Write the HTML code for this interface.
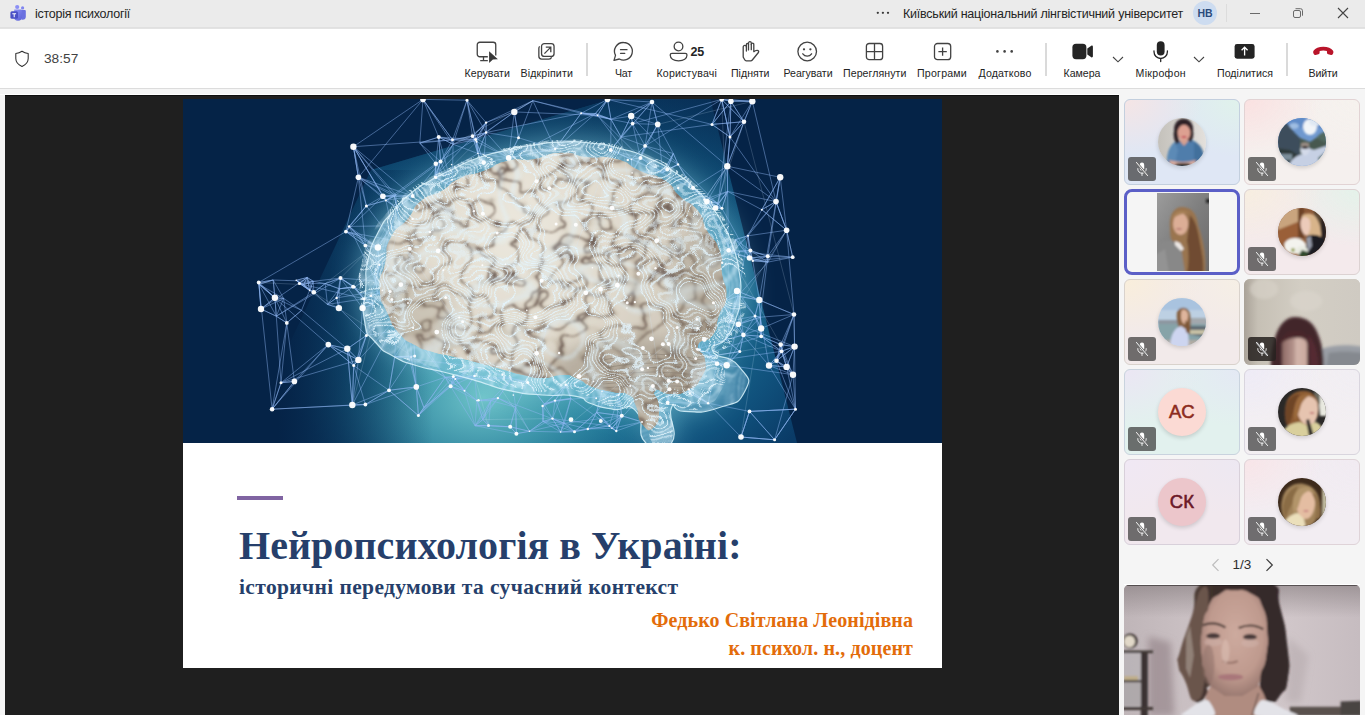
<!DOCTYPE html>
<html lang="uk">
<head>
<meta charset="utf-8">
<title>історія психології</title>
<style>
*{box-sizing:border-box;margin:0;padding:0}
html,body{width:1365px;height:715px;overflow:hidden;background:#f5f5f5}
body{position:relative;font-family:"Liberation Sans",sans-serif;color:#242424}
.abs{position:absolute}
#titlebar{left:0;top:0;width:1365px;height:28px;background:#ebebeb;border-bottom:1px solid #e0e0e0}
#titlebar .t{position:absolute;top:0;height:30px;line-height:29.500px;font-size:12.500px;color:#242424;white-space:nowrap}
#toolbar{left:0;top:28px;width:1365px;height:61px;background:#fff;border-top:1px solid #e3e3e3;border-bottom:1px solid #dcdcdc}
.tb{position:absolute;top:0;height:60px;transform:translateX(-50%);text-align:center;white-space:nowrap}
.tb svg{position:absolute;left:50%;top:10px;transform:translateX(-50%);overflow:visible}
.tb span{position:absolute;left:50%;top:37px;transform:translateX(-50%);font-size:11.4px;line-height:14px;color:#242424}
.sep{position:absolute;top:14px;width:1.500px;height:33px;background:#dadada}
#stage{left:5px;top:95px;width:1114px;height:620px;background:#1f1f1f}
#slide{left:183px;top:99px;width:759px;height:569px;background:#fff;overflow:hidden}
#slide .ser{position:absolute;font-family:"Liberation Serif",serif;font-weight:bold;white-space:nowrap}
.tile{position:absolute;width:115.500px;height:86px;border-radius:6px;border:1px solid #dcdce0;overflow:hidden}
.tile .av{position:absolute;left:33px;top:17.700px;width:48px;height:48px;border-radius:50%;overflow:hidden;box-shadow:0 2px 4px rgba(0,0,0,.15)}
.tile .mute{position:absolute;left:3px;top:56.700px;width:28px;height:24px;border-radius:3px;background:rgba(60,60,60,.72)}
.tile .mute svg{position:absolute;left:6px;top:4px}
.ini{font-size:18.500px;line-height:48px;text-align:center;font-weight:normal;-webkit-text-stroke:.55px currentColor;letter-spacing:.3px}
.lb{position:absolute;top:37px;font-size:10.600px;line-height:14px;color:#242424;white-space:nowrap;text-align:center}
</style>
</head>
<body>

<!-- ===== Title bar ===== -->
<div id="titlebar" class="abs">
  <svg class="abs" style="left:10px;top:4px" width="17" height="18" viewBox="0 0 17 18">
    <defs><linearGradient id="tg" x1="0" y1="0" x2="1" y2="1"><stop offset="0" stop-color="#8f94f8"/><stop offset="1" stop-color="#5a60d6"/></linearGradient></defs>
    <circle cx="12.600" cy="3.900" r="1.600" fill="#7f85f0"/>
    <circle cx="7.200" cy="3" r="2.100" fill="#8b8ff5"/>
    <path d="M9.500 6h5.300a1 1 0 0 1 1 1v5.500a3.300 3.300 0 0 1-3.300 3.300h-1z" fill="#6a70e0"/>
    <path d="M4.200 5.500h6.600a1.200 1.200 0 0 1 1.200 1.200v6a4 4 0 0 1-4 4 4 4 0 0 1-4-4z" fill="url(#tg)"/>
    <rect x="0.400" y="7.200" width="7.600" height="7.600" rx="1.500" fill="#4a50c6"/>
    <path d="M2.300 9.300h3.800v1H4.700v3H3.700v-3H2.300z" fill="#fff"/>
  </svg>
  <div class="t" id="ttl" style="letter-spacing:-0.255px;left:35px">історія психології</div>
  <svg class="abs" style="left:876px;top:11px" width="14" height="4" viewBox="0 0 14 4"><circle cx="1.800" cy="1.800" r="1.150" fill="#3a3a3a"/><circle cx="6.900" cy="1.800" r="1.150" fill="#3a3a3a"/><circle cx="12" cy="1.800" r="1.150" fill="#3a3a3a"/></svg>
  <div class="t" id="org" style="letter-spacing:-0.224px;left:903px">Київський національний лінгвістичний університет</div>
  <div class="abs" style="left:1193px;top:1px;width:24px;height:24px;border-radius:50%;background:#cddcf0;color:#2b4b7c;font-size:10.500px;font-weight:bold;line-height:24.500px;text-align:center">НВ</div>
  <div class="abs" style="left:1226px;top:4px;width:1px;height:18px;background:#dcdcdc"></div>
  <svg class="abs" style="left:1249px;top:7px" width="12" height="12" viewBox="0 0 12 12"><path d="M1 6.500h10" stroke="#6a6a6a" stroke-width="1" fill="none"/></svg>
  <svg class="abs" style="left:1292px;top:7px" width="12" height="12" viewBox="0 0 12 12"><rect x="1.500" y="3.500" width="7" height="7" rx="1.500" stroke="#6a6a6a" fill="none"/><path d="M3.500 1.700h5a2 2 0 0 1 2 2v5" stroke="#6a6a6a" fill="none"/></svg>
  <svg class="abs" style="left:1337px;top:7px" width="12" height="12" viewBox="0 0 12 12"><path d="M1 1l10 10M11 1L1 11" stroke="#444" stroke-width="1.100" fill="none"/></svg>
</div>

<!-- ===== Toolbar ===== -->
<div id="toolbar" class="abs">
  <svg class="abs" style="left:14px;top:21px" width="16" height="18" viewBox="0 0 16 18"><path d="M8 1.200c2 1.400 4 2 6.200 2.200v5.200c0 3.700-2.500 6.300-6.200 7.900C4.300 14.900 1.800 12.300 1.800 8.600V3.400C4 3.200 6 2.600 8 1.200z" fill="none" stroke="#2e2e2e" stroke-width="1.050" stroke-linejoin="round"/></svg>
  <div class="abs" style="left:44px;top:22px;font-size:13.700px;line-height:16px;color:#424242">38:57</div>
    <!-- toolbar icons: coordinates relative to toolbar (top = 28px page; inner origin y=29) -->
  <div class="sep" style="left:586px"></div>
  <div class="sep" style="left:1045px"></div>
  <div class="sep" style="left:1286px"></div>

  <!-- Керувати -->
  <svg class="abs" style="left:476px;top:12px" width="23" height="23" viewBox="0 0 23 23">
    <path d="M11.800 15.750H3.750A2.500 2.500 0 0 1 1.250 13.250V3.750A2.500 2.500 0 0 1 3.750 1.250H17.250A2.500 2.500 0 0 1 19.750 3.750V14.500" fill="none" stroke="#424242" stroke-width="1.300"/>
    <path d="M7.500 15.750V19.700M4.200 19.700H11.800" fill="none" stroke="#424242" stroke-width="1.300"/>
    <path d="M13.100 10.200L21.900 18.300 16.900 18.500 13.100 21.900z" fill="#383838"/>
  </svg>
  <span class="lb" style="left:464.5px;width:45.500px;letter-spacing:0.053px">Керувати</span>

  <!-- Відкріпити -->
  <svg class="abs" style="left:537px;top:13px" width="20" height="19" viewBox="0 0 20 19">
    <rect x="4.550" y="1.550" width="12.500" height="12.900" rx="2.800" fill="none" stroke="#424242" stroke-width="1.300"/>
    <path d="M2.600 4.400A2.800 2.800 0 0 0 1.850 6.400V14.300A2.800 2.800 0 0 0 4.650 17.100H12A2.800 2.800 0 0 0 14.600 15.300" fill="none" stroke="#424242" stroke-width="1.300"/>
    <path d="M7.400 11.600L13.600 5.400M8.800 5.200H13.800V10.200" fill="none" stroke="#424242" stroke-width="1.300"/>
  </svg>
  <span class="lb" style="left:520.500px;width:52.500px;letter-spacing:0.159px">Відкріпити</span>

  <!-- Чат -->
  <svg class="abs" style="left:612px;top:12px" width="23" height="22" viewBox="0 0 23 22">
    <path d="M11.600 1.500a8.800 8.800 0 1 1-4.300 16.500L2 19.400l1.500-5A8.800 8.800 0 0 1 11.600 1.500z" fill="none" stroke="#424242" stroke-width="1.300" stroke-linejoin="round"/>
    <path d="M8.500 8.700h6.500M8.500 12.300h4.300" fill="none" stroke="#424242" stroke-width="1.300" stroke-linecap="round"/>
  </svg>
  <span class="lb" style="left:615px;width:17px;letter-spacing:-0.193px">Чат</span>

  <!-- Користувачі -->
  <svg class="abs" style="left:669px;top:12px" width="20" height="22" viewBox="0 0 20 22">
    <circle cx="9.500" cy="5.500" r="4.350" fill="none" stroke="#424242" stroke-width="1.300"/>
    <path d="M3 12.300h13.200a1.800 1.800 0 0 1 1.800 1.800c0 3.300-3.300 5.700-8.400 5.700S1.200 17.400 1.200 14.100A1.800 1.800 0 0 1 3 12.300z" fill="none" stroke="#424242" stroke-width="1.300"/>
  </svg>
  <span class="abs" style="left:690.500px;top:15.500px;font-size:12.500px;line-height:14px;font-weight:bold;color:#242424;letter-spacing:-.3px">25</span>
  <span class="lb" style="left:656.500px;width:60.500px;letter-spacing:0.183px">Користувачі</span>

  <!-- Підняти -->
  <svg class="abs" style="left:741px;top:12px" width="20" height="22" viewBox="0 0 20 22">
    <path d="M2.200 15.500V6a1.600 1.600 0 0 1 3.200 0V3.400a1.050 1.050 0 0 1 2.100 0V2.100a1.400 1.400 0 0 1 2.800 0V3.400a1.250 1.250 0 0 1 2.500 0V10.700c.9-.9 2.200-1.500 3.500-1.400 1.200.1 1.800 1.300 1.100 2.200L11.300 19c-.4.500-1 .8-1.600.8H5.300c-.7 0-1.300-.4-1.600-1l-1.100-2c-.3-.4-.4-.9-.4-1.300z" fill="none" stroke="#424242" stroke-width="1.300" stroke-linejoin="round"/>
    <path d="M5.400 6v4M7.500 3.400v5.500M10.300 3.400v5.300" fill="none" stroke="#424242" stroke-width="1.300" stroke-linecap="round"/>
  </svg>
  <span class="lb" style="left:731px;width:38.500px;letter-spacing:-0.002px">Підняти</span>

  <!-- Реагувати -->
  <svg class="abs" style="left:796px;top:12px" width="22" height="22" viewBox="0 0 22 22">
    <circle cx="11.200" cy="10.500" r="9.300" fill="none" stroke="#424242" stroke-width="1.300"/>
    <circle cx="8" cy="8.300" r="1.150" fill="#424242"/><circle cx="14.400" cy="8.300" r="1.150" fill="#424242"/>
    <path d="M6.800 12.800c2.200 3 6.600 3 8.800 0" fill="none" stroke="#424242" stroke-width="1.300" stroke-linecap="round"/>
  </svg>
  <span class="lb" style="left:783.500px;width:49px;letter-spacing:-0.054px">Реагувати</span>

  <!-- Переглянути -->
  <svg class="abs" style="left:865px;top:13px" width="19" height="19" viewBox="0 0 19 19">
    <rect x="1.400" y="1.500" width="16.200" height="16.200" rx="2.800" fill="none" stroke="#424242" stroke-width="1.300"/>
    <path d="M9.500 1.500v16.200M1.400 9.600h16.200" fill="none" stroke="#424242" stroke-width="1.300"/>
  </svg>
  <span class="lb" style="left:843px;width:63.500px;letter-spacing:0.067px">Переглянути</span>

  <!-- Програми -->
  <svg class="abs" style="left:933px;top:13px" width="19" height="19" viewBox="0 0 19 19">
    <rect x="1.500" y="1.500" width="16.200" height="16.200" rx="3" fill="none" stroke="#424242" stroke-width="1.300"/>
    <path d="M9.600 5.400v8.400M5.400 9.600h8.400" fill="none" stroke="#424242" stroke-width="1.300"/>
  </svg>
  <span class="lb" style="left:917px;width:50px;letter-spacing:0.219px">Програми</span>

  <!-- Додатково -->
  <svg class="abs" style="left:995px;top:20px" width="20" height="5" viewBox="0 0 20 5">
    <circle cx="2.400" cy="2.400" r="1.300" fill="#424242"/><circle cx="9.600" cy="2.400" r="1.300" fill="#424242"/><circle cx="16.700" cy="2.400" r="1.300" fill="#424242"/>
  </svg>
  <span class="lb" style="left:978.500px;width:53px;letter-spacing:0.144px">Додатково</span>

  <!-- Камера -->
  <svg class="abs" style="left:1072px;top:14px" width="22" height="17" viewBox="0 0 22 17">
    <rect x="0.400" y="0.800" width="14" height="15.400" rx="3.600" fill="#242424"/>
    <path d="M15.300 5.600l4-2.800c.7-.5 1.600 0 1.600.9v9.600c0 .9-.9 1.400-1.600.9l-4-2.800z" fill="#242424"/>
  </svg>
  <span class="lb" style="left:1063.500px;width:37px;letter-spacing:-0.005px">Камера</span>
  <svg class="abs" style="left:1112px;top:27px" width="12" height="7" viewBox="0 0 12 7"><path d="M1 1l5 4.800L11 1" fill="none" stroke="#424242" stroke-width="1.100"/></svg>

  <!-- Мікрофон -->
  <svg class="abs" style="left:1152px;top:12px" width="17" height="22" viewBox="0 0 17 22">
    <rect x="4.800" y="0.200" width="7.800" height="14.300" rx="3.900" fill="#242424"/>
    <path d="M2 9.800v1a6.700 6.700 0 0 0 13.400 0v-1M8.700 17.500v3" fill="none" stroke="#242424" stroke-width="1.300" stroke-linecap="round"/>
  </svg>
  <span class="lb" style="left:1135.500px;width:50.500px;letter-spacing:0.305px">Мікрофон</span>
  <svg class="abs" style="left:1193px;top:27px" width="12" height="7" viewBox="0 0 12 7"><path d="M1 1l5 4.800L11 1" fill="none" stroke="#424242" stroke-width="1.100"/></svg>

  <!-- Поділитися -->
  <svg class="abs" style="left:1234px;top:15px" width="21" height="15" viewBox="0 0 21 15">
    <rect x="0.600" y="0" width="20" height="14.700" rx="2.400" fill="#242424"/>
    <path d="M10.600 11.500V3.300M7.600 6.200l3-3 3 3" fill="none" stroke="#fff" stroke-width="1.300"/>
  </svg>
  <span class="lb" style="left:1217px;width:56px;letter-spacing:0.028px">Поділитися</span>

  <!-- Вийти -->
  <svg class="abs" style="left:1313px;top:17px" width="21" height="10" viewBox="0 0 21 10">
    <path d="M10.300 0.800c4.500 0 8 1.500 9.600 3.600.7.900.6 2 .2 3l-.3.700c-.3.700-1 1-1.800.8l-2.800-.7c-.7-.2-1.200-.8-1.200-1.500l-.1-1.700c-2.300-.8-4.900-.8-7.200 0l-.1 1.700c0 .7-.5 1.300-1.200 1.500l-2.800.7c-.8.200-1.500-.1-1.800-.8l-.3-.7c-.4-1-.5-2.100.2-3C2.300 2.300 5.800.8 10.300.8z" fill="#b9142a"/>
  </svg>
  <span class="lb" style="left:1308.500px;width:29px;letter-spacing:-0.134px">Вийти</span>

</div>

<!-- ===== Stage ===== -->
<div class="abs" style="left:0;top:94px;width:1119px;height:1px;background:#fff"></div>
<div id="stage" class="abs"><div class="abs" style="left:0;top:0;width:100%;height:1.200px;background:#0f0f0f"></div></div>
<div id="slide" class="abs">
  <div class="abs" style="left:0;top:0;width:759px;height:343.750px;overflow:hidden;background:#052347"><svg class="abs" style="left:0;top:-1px" width="759" height="345" viewBox="0 0 759 345">
<defs>
<radialGradient id="glow" cx="0" cy="0" r="1" gradientUnits="userSpaceOnUse" gradientTransform="translate(372 195) scale(300 235)">
<stop offset="0" stop-color="#2f8fa8"/><stop offset=".5" stop-color="#1d7294"/><stop offset=".8" stop-color="#10517c"/><stop offset="1" stop-color="#0a3b67"/></radialGradient>
<radialGradient id="glow2" cx="0" cy="0" r="1" gradientUnits="userSpaceOnUse" gradientTransform="translate(300 300) rotate(-8) scale(215 150)">
<stop offset="0" stop-color="#74c8cc" stop-opacity=".95"/><stop offset=".35" stop-color="#4eaab8" stop-opacity=".7"/><stop offset=".7" stop-color="#2f8fa8" stop-opacity=".3"/><stop offset="1" stop-color="#2f8fa8" stop-opacity="0"/></radialGradient>
<linearGradient id="leftfade" x1="95" y1="0" x2="250" y2="0" gradientUnits="userSpaceOnUse"><stop offset="0" stop-color="#052347"/><stop offset="1" stop-color="#052347" stop-opacity="0"/></linearGradient>
<linearGradient id="topfade" x1="0" y1="0" x2="0" y2="150" gradientUnits="userSpaceOnUse"><stop offset="0" stop-color="#052347" stop-opacity=".55"/><stop offset="1" stop-color="#052347" stop-opacity="0"/></linearGradient>
<radialGradient id="beige" cx="330" cy="130" r="230" gradientUnits="userSpaceOnUse">
<stop offset="0" stop-color="#e6dccb"/><stop offset=".5" stop-color="#cfc1ac"/><stop offset="1" stop-color="#a3917a"/></radialGradient>
<filter id="b3" x="-20%" y="-20%" width="140%" height="140%"><feGaussianBlur stdDeviation="3"/></filter>
<filter id="b8" x="-20%" y="-20%" width="140%" height="140%"><feGaussianBlur stdDeviation="8"/></filter>
<filter id="b14" x="-30%" y="-30%" width="160%" height="160%"><feGaussianBlur stdDeviation="14"/></filter>
<filter id="sulci" x="0" y="0" width="100%" height="100%" color-interpolation-filters="sRGB">
 <feTurbulence type="fractalNoise" baseFrequency="0.042 0.048" numOctaves="2" seed="9"/>
 <feColorMatrix type="matrix" values="0 0 0 0 .36  0 0 0 0 .27  0 0 0 0 .22  1 0 0 0 0"/>
 <feComponentTransfer><feFuncA type="table" tableValues="0 0 0 0 0 0 0 0 0 0 0 0 0 0 0 0 0 0 0 0 0 0 0 0 0 0 0 0 0 0 0 0 0 0 0 0 0 0 0 0 0 0.02 0.06 0.11 0.15 0.23 0.6 0.95 0.95 0.6 0.23 0.15 0.11 0.06 0.02 0 0 0 0 0 0 0 0 0 0 0 0 0 0 0 0 0 0 0 0 0 0 0 0 0 0 0 0 0 0 0 0 0 0 0 0 0 0 0 0 0 0 0 0 0 0"/></feComponentTransfer>
 <feGaussianBlur stdDeviation=".8"/>
</filter>
<filter id="hil" x="0" y="0" width="100%" height="100%" color-interpolation-filters="sRGB">
 <feTurbulence type="fractalNoise" baseFrequency="0.042 0.048" numOctaves="2" seed="9"/>
 <feColorMatrix type="matrix" values="0 0 0 0 1  0 0 0 0 .98  0 0 0 0 .94  1 0 0 0 0"/>
 <feComponentTransfer><feFuncA type="table" tableValues="0.38 0.38 0.38 0.38 0.38 0.38 0.38 0.38 0.38 0.38 0.38 0.38 0.38 0.38 0.38 0.38 0.38 0.38 0.38 0.38 0.38 0.38 0.38 0.38 0.38 0.38 0.38 0.38 0.38 0.38 0.38 0.38 0.38 0.38 0.38 0.38 0.34 0.3 0.25 0.21 0.17 0.13 0.08 0.04 0 0 0 0 0 0 0 0 0.04 0.08 0.13 0.17 0.21 0.25 0.3 0.34 0.38 0.38 0.38 0.38 0.38 0.38 0.38 0.38 0.38 0.38 0.38 0.38 0.38 0.38 0.38 0.38 0.38 0.38 0.38 0.38 0.38 0.38 0.38 0.38 0.38 0.38 0.38 0.38 0.38 0.38 0.38 0.38 0.38 0.38 0.38 0.38 0.38 0.38 0.38 0.38 0.38"/></feComponentTransfer>
 <feGaussianBlur stdDeviation="1.5"/>
</filter>
<filter id="wisp" x="0" y="0" width="100%" height="100%" color-interpolation-filters="sRGB">
 <feTurbulence type="fractalNoise" baseFrequency="0.014 0.018" numOctaves="3" seed="23"/>
 <feColorMatrix type="matrix" values="0 0 0 0 .9  0 0 0 0 .97  0 0 0 0 1  1 0 0 0 0"/>
 <feComponentTransfer><feFuncA type="table" tableValues="0 0 0 0 0 0 0 0 0 0 0 0 0 0 0 0 0 0 0 0 0 0 0 0 0 0 0 0 0 0 0 0 0 0 0 0.08 0.9 0.08 0 0 0.08 0.9 0.08 0 0 0.49 0.49 0 0 0.08 0.9 0.08 0 0 0.49 0.49 0 0 0.08 0.9 0.08 0 0 0.08 0.9 0.08 0 0 0 0 0 0 0 0 0 0 0 0 0 0 0 0 0 0 0 0 0 0 0 0 0 0 0 0 0 0 0 0 0 0 0"/></feComponentTransfer>
 <feGaussianBlur stdDeviation=".5"/>
</filter>
<filter id="wisp2" x="0" y="0" width="100%" height="100%" color-interpolation-filters="sRGB">
 <feTurbulence type="fractalNoise" baseFrequency="0.02 0.016" numOctaves="2" seed="41"/>
 <feColorMatrix type="matrix" values="0 0 0 0 .85  0 0 0 0 .95  0 0 0 0 1  1 0 0 0 0"/>
 <feComponentTransfer><feFuncA type="table" tableValues="0 0 0 0 0 0 0 0 0 0 0 0 0 0 0 0 0 0 0 0 0 0 0 0 0 0 0 0 0 0 0 0 0 0 0 0 0 0.1 0.6 0.13 0.2 0.03 0 0.1 0.6 0.13 0.2 0.03 0 0.1 0.6 0.13 0.2 0.03 0 0.1 0.6 0.13 0.2 0.03 0 0.1 0.6 0.13 0.2 0.03 0 0 0 0 0 0 0 0 0 0 0 0 0 0 0 0 0 0 0 0 0 0 0 0 0 0 0 0 0 0 0 0 0 0 0"/></feComponentTransfer>
 <feGaussianBlur stdDeviation=".8"/>
</filter>
<filter id="rib" x="0" y="0" width="100%" height="100%" color-interpolation-filters="sRGB">
 <feTurbulence type="fractalNoise" baseFrequency="0.009 0.012" numOctaves="2" seed="77"/>
 <feColorMatrix type="matrix" values="0 0 0 0 .88  0 0 0 0 .96  0 0 0 0 1  1 0 0 0 0"/>
 <feComponentTransfer><feFuncA type="table" tableValues="0 0 0 0 0 0 0 0 0 0 0 0 0 0 0 0 0 0 0 0 0 0 0 0 0 0 0 0 0 0 0 0 0 0 0 0 0.14 0.28 0.42 0.28 0.14 0 0 0 0 0 0 0 0.14 0.28 0.42 0.28 0.14 0 0 0 0 0 0 0 0.14 0.28 0.42 0.28 0.14 0 0 0 0 0 0 0 0 0 0 0 0 0 0 0 0 0 0 0 0 0 0 0 0 0 0 0 0 0 0 0 0 0 0 0 0"/></feComponentTransfer>
 <feGaussianBlur stdDeviation="1.2"/>
</filter>
<clipPath id="bc"><path d="M196.8 190.2C195.9 173.2 198.5 182.0 202.2 165.1C205.9 148.2 200.2 154.4 207.8 139.5C215.5 124.7 215.1 132.6 225.1 120.4C235.2 108.2 226.8 112.2 238.1 103.0C249.3 93.7 246.2 100.2 259.0 92.7C271.8 85.2 262.5 87.0 276.4 80.5C290.3 73.9 284.8 78.8 300.7 73.0C316.6 67.2 307.6 66.9 324.1 63.0C340.6 59.0 332.2 63.9 350.2 61.2C368.2 58.5 360.0 55.5 378.1 54.8C396.3 54.1 386.4 57.1 404.7 59.2C423.0 61.2 415.5 56.5 433.0 61.1C450.6 65.6 441.0 65.7 457.2 72.9C473.4 80.1 468.4 74.0 481.7 82.6C494.9 91.2 485.9 88.4 497.0 98.6C508.1 108.8 506.1 101.9 515.0 113.1C524.0 124.4 516.8 119.5 523.8 132.3C530.9 145.2 531.2 137.5 536.2 151.7C541.2 165.9 536.5 159.5 538.8 175.0C541.1 190.5 544.2 184.1 543.2 198.3C542.2 212.5 540.2 204.9 535.8 217.7C531.5 230.5 537.0 226.9 530.0 236.8C523.1 246.7 517.6 239.1 514.9 247.5C512.2 255.9 521.0 251.2 522.0 262.0C523.0 272.8 523.7 270.0 518.0 280.0C512.3 290.0 515.0 286.7 505.0 292.0C495.0 297.3 499.0 295.7 488.0 296.0C477.0 296.3 476.0 288.3 472.0 293.0C468.0 297.7 476.3 298.0 476.0 310.0C475.7 322.0 476.7 323.7 471.0 329.0C465.3 334.3 465.0 333.0 459.0 326.0C453.0 319.0 457.3 317.7 453.0 308.0C448.7 298.3 453.7 301.7 446.0 297.0C438.3 292.3 442.0 296.7 430.0 294.0C418.0 291.3 421.7 293.3 410.0 289.0C398.3 284.7 405.0 285.0 395.0 281.0C385.0 277.0 391.7 277.3 380.0 277.0C368.3 276.7 373.3 280.0 360.0 280.0C346.7 280.0 354.0 280.0 340.0 277.0C326.0 274.0 332.7 275.0 318.0 271.0C303.3 267.0 311.3 269.0 296.0 265.0C280.7 261.0 287.3 262.7 272.0 259.0C256.7 255.3 263.3 258.0 250.0 254.0C236.7 250.0 243.3 253.3 232.0 247.0C220.7 240.7 225.0 245.3 216.0 235.0C207.0 224.7 211.4 230.9 205.0 216.0C198.6 201.1 197.7 207.2 196.8 190.2Z"/></clipPath>
<clipPath id="mc"><path d="M182.8 189.7C183.8 169.3 180.9 180.6 184.9 162.3C189.0 144.1 186.4 151.4 194.8 135.0C203.2 118.5 199.2 126.2 210.1 113.1C221.1 99.9 215.2 105.8 227.7 95.5C240.1 85.3 233.5 90.4 247.4 82.4C261.2 74.4 253.9 78.8 269.3 71.5C284.6 64.2 276.2 66.7 293.4 60.5C310.5 54.3 302.5 57.2 320.7 52.8C339.0 48.5 328.8 50.3 348.1 47.4C367.4 44.4 358.7 44.8 378.8 44.1C398.8 43.3 388.6 43.0 408.3 45.2C428.0 47.4 418.5 45.5 437.9 50.6C457.2 55.8 448.8 52.8 466.4 60.5C483.9 68.2 475.9 64.2 490.4 73.6C505.0 83.1 498.1 78.0 510.2 89.0C522.2 99.9 516.7 94.1 526.6 106.5C536.4 118.9 532.1 112.3 539.7 126.2C547.4 140.1 544.1 132.4 549.6 148.1C555.1 163.8 553.6 156.5 556.1 173.3C558.7 190.1 558.3 182.8 557.2 198.5C556.1 214.2 557.6 206.5 552.9 220.4C548.1 234.2 550.7 229.1 543.0 240.1C535.3 251.0 525.5 243.7 529.9 253.2C534.2 262.7 545.6 255.0 556.1 268.6C566.7 282.1 568.9 279.9 561.6 293.7C554.3 307.6 554.3 303.6 534.2 310.2C514.2 316.7 516.7 313.4 501.4 313.4C486.1 313.4 492.6 299.6 488.3 310.2C483.9 320.7 496.7 333.5 488.3 345.2C479.9 356.9 474.8 355.8 463.1 345.2C451.4 334.6 464.2 324.8 453.2 313.4C442.3 302.1 445.2 313.8 430.2 311.3C415.3 308.7 421.1 310.2 408.3 305.8C395.5 301.4 408.3 301.0 391.9 298.1C375.5 295.2 380.9 298.8 359.1 297.0C337.2 295.2 348.1 297.4 326.2 292.6C304.3 287.9 315.2 289.0 293.4 282.8C271.5 276.6 280.6 279.1 260.5 274.0C240.4 268.9 249.6 272.6 233.1 267.5C216.7 262.3 224.7 266.4 211.2 258.7C197.7 251.0 202.5 256.1 192.6 244.5C182.8 232.8 184.9 241.9 181.7 223.7C178.4 205.4 181.7 210.2 182.8 189.7Z"/></clipPath>
<clipPath id="hc"><path d="M176.8 192.3C175.3 173.1 174.9 182.9 179.0 164.1C183.2 145.3 180.5 152.8 189.2 135.8C197.9 118.9 193.7 126.8 205.0 113.2C216.3 99.7 210.3 105.7 223.1 95.2C235.9 84.6 229.1 89.9 243.4 81.6C257.8 73.3 250.2 77.8 266.0 70.3C281.9 62.8 273.2 65.4 290.9 59.0C308.6 52.6 300.3 55.6 319.1 51.1C338.0 46.6 327.4 48.5 347.4 45.4C367.4 42.4 358.3 42.8 379.0 42.1C399.8 41.3 389.2 40.9 409.6 43.2C429.9 45.4 420.1 43.6 440.1 48.8C460.0 54.1 451.4 51.1 469.4 59.0C487.5 66.9 479.2 62.8 494.3 72.6C509.4 82.4 502.2 77.1 514.6 88.4C527.1 99.7 521.4 93.7 531.6 106.5C541.8 119.3 537.2 112.5 545.1 126.8C553.1 141.1 549.7 133.2 555.3 149.4C561.0 165.6 559.5 158.1 562.1 175.4C564.7 192.7 564.4 185.2 563.2 201.4C562.1 217.6 563.6 209.7 558.7 224.0C553.8 238.3 556.4 233.0 548.5 244.3C540.6 255.6 537.2 248.1 535.0 257.9C532.7 267.7 541.0 261.6 541.8 273.7C542.5 285.8 543.6 282.7 537.2 294.0C530.8 305.3 533.8 301.6 522.5 307.6C511.2 313.6 515.8 311.7 503.3 312.1C490.9 312.5 489.8 303.5 485.3 308.7C480.7 314.0 490.2 314.4 489.8 327.9C489.4 341.5 490.5 343.4 484.1 349.4C477.7 355.4 477.4 353.9 470.6 346.0C463.8 338.1 468.7 336.6 463.8 325.7C458.9 314.8 464.5 318.5 455.9 313.2C447.2 308.0 451.4 312.9 437.8 309.9C424.2 306.8 428.4 309.1 415.2 304.2C402.0 299.3 409.6 299.7 398.2 295.2C386.9 290.6 394.5 291.0 381.3 290.6C368.1 290.3 373.8 294.0 358.7 294.0C343.6 294.0 351.9 294.0 336.1 290.6C320.3 287.3 327.8 288.4 311.2 283.9C294.7 279.4 303.7 281.6 286.4 277.1C269.1 272.6 276.6 274.5 259.3 270.3C241.9 266.2 249.5 269.2 234.4 264.7C219.3 260.1 226.9 263.9 214.1 256.8C201.3 249.6 206.2 254.9 196.0 243.2C185.8 231.5 190.0 238.7 183.6 221.7C177.1 204.8 178.3 211.6 176.8 192.3Z"/></clipPath>
</defs>
<rect width="759" height="345" fill="#052347"/>
<path d="M188 72L432 0H527L614 345H60z" fill="url(#glow)"/>
<path d="M188 72L432 0H527L614 345H60z" fill="url(#glow2)"/>
<rect x="60" y="72" width="240" height="273" fill="url(#leftfade)"/>
<path d="M188 72L432 0H527L570 150H150z" fill="url(#topfade)"/>
<path d="M75.7 184.5L76.1 186.3 M75.7 184.5L90.2 182.0 M75.7 184.5L91.9 199.8 M91.9 199.8L100.7 200.5 M91.9 199.8L78.0 211.0 M91.9 199.8L90.2 182.0 M91.9 199.8L93.3 218.2 M91.9 199.8L76.1 186.3 M91.9 199.8L75.7 184.5 M91.9 199.8L118.5 212.4 M78.0 211.0L93.3 218.2 M78.0 211.0L91.9 199.8 M78.0 211.0L76.1 186.3 M78.0 211.0L100.7 200.5 M78.0 211.0L75.7 184.5 M78.0 211.0L124.2 179.5 M103.8 224.9L93.3 218.2 M103.8 224.9L118.5 212.4 M103.8 224.9L100.7 200.5 M103.8 224.9L91.9 199.8 M130.8 194.3L126.6 192.4 M130.8 194.3L130.3 183.3 M130.8 194.3L120.6 186.6 M130.8 194.3L142.2 185.6 M130.8 194.3L124.2 179.5 M130.8 194.3L116.4 185.4 M130.8 194.3L93.3 218.2 M155.9 210.1L153.6 199.9 M155.9 210.1L144.4 206.4 M155.9 210.1L156.4 190.8 M155.9 210.1L183.4 237.4 M145.3 246.6L164.3 250.8 M145.3 246.6L170.7 267.5 M145.3 246.6L175.4 261.9 M164.3 250.8L175.4 261.9 M164.3 250.8L170.7 267.5 M164.3 250.8L145.3 246.6 M164.3 250.8L183.4 237.4 M164.3 250.8L169.3 307.0 M170.7 267.5L175.4 261.9 M170.7 267.5L164.3 250.8 M170.7 267.5L183.4 237.4 M170.7 267.5L145.3 246.6 M170.7 267.5L169.3 307.0 M170.7 267.5L215.6 217.8 M175.4 261.9L170.7 267.5 M175.4 261.9L164.3 250.8 M175.4 261.9L183.4 237.4 M175.4 261.9L145.3 246.6 M175.4 261.9L179.6 210.1 M98.0 284.8L111.4 283.4 M98.0 284.8L89.1 311.2 M98.0 284.8L103.8 224.9 M98.0 284.8L145.3 246.6 M98.0 284.8L93.3 218.2 M98.0 284.8L164.3 250.8 M98.0 284.8L175.4 261.9 M111.4 283.4L98.0 284.8 M111.4 283.4L89.1 311.2 M111.4 283.4L145.3 246.6 M111.4 283.4L103.8 224.9 M89.1 311.2L98.0 284.8 M89.1 311.2L111.4 283.4 M89.1 311.2L169.3 307.0 M89.1 311.2L145.3 246.6 M89.1 311.2L103.8 224.9 M169.3 307.0L182.4 306.5 M169.3 307.0L170.7 267.5 M169.3 307.0L206.0 292.3 M169.3 307.0L175.4 261.9 M169.3 307.0L164.3 250.8 M169.3 307.0L215.6 217.8 M182.4 306.5L169.3 307.0 M182.4 306.5L206.0 292.3 M182.4 306.5L170.7 267.5 M206.0 292.3L233.3 288.9 M206.0 292.3L182.4 306.5 M206.0 292.3L211.7 258.8 M206.0 292.3L235.4 317.5 M206.0 292.3L170.7 267.5 M233.3 288.9L240.9 309.7 M233.3 288.9L206.0 292.3 M233.3 288.9L235.4 317.5 M233.3 288.9L228.1 259.0 M233.3 288.9L262.2 279.3 M233.3 288.9L231.7 257.9 M233.3 288.9L215.6 217.8 M179.6 210.1L180.9 200.8 M179.6 210.1L189.9 206.2 M179.6 210.1L188.0 197.8 M170.4 48.7L175.4 79.3 M170.4 48.7L199.9 98.3 M170.4 48.7L183.4 107.9 M170.4 48.7L202.9 102.4 M170.4 48.7L212.9 96.9 M170.4 48.7L211.5 98.3 M175.4 79.3L183.4 107.9 M175.4 79.3L199.9 98.3 M175.4 79.3L170.4 48.7 M175.4 79.3L202.9 102.4 M175.4 79.3L211.5 98.3 M175.4 79.3L212.9 96.9 M175.4 79.3L182.4 147.6 M199.9 98.3L202.9 102.4 M199.9 98.3L211.5 98.3 M199.9 98.3L212.9 96.9 M229.7 98.0L212.9 96.9 M229.7 98.0L211.5 98.3 M229.7 98.0L214.0 110.1 M229.7 98.0L202.9 102.4 M162.9 133.6L166.1 128.4 M162.9 133.6L175.7 137.5 M162.9 133.6L182.4 147.6 M162.9 133.6L183.4 107.9 M162.9 133.6L194.9 149.5 M182.4 147.6L175.7 137.5 M182.4 147.6L194.9 149.5 M182.4 147.6L196.4 166.8 M182.4 147.6L162.9 133.6 M194.9 149.5L182.4 147.6 M194.9 149.5L196.4 166.8 M194.9 149.5L175.7 137.5 M194.9 149.5L219.6 144.2 M194.9 149.5L208.4 127.8 M240.0 1.4L255.7 39.1 M240.0 1.4L236.8 45.1 M240.0 1.4L284.0 2.2 M240.0 1.4L269.5 41.8 M240.0 1.4L270.1 46.3 M240.0 1.4L175.4 79.3 M284.0 2.2L303.1 24.6 M284.0 2.2L289.5 38.1 M284.0 2.2L303.1 34.5 M284.0 2.2L292.6 41.4 M284.0 2.2L269.5 41.8 M284.0 2.2L293.6 43.7 M284.0 2.2L270.1 46.3 M269.5 41.8L270.1 46.3 M269.5 41.8L255.7 39.1 M269.5 41.8L289.5 38.1 M269.5 41.8L292.6 41.4 M269.5 41.8L293.6 43.7 M269.5 41.8L257.6 63.6 M289.5 38.1L292.6 41.4 M289.5 38.1L293.6 43.7 M289.5 38.1L303.1 34.5 M289.5 38.1L294.9 55.5 M289.5 38.1L303.1 24.6 M289.5 38.1L269.5 41.8 M289.5 38.1L325.7 59.9 M331.3 13.9L349.9 2.7 M331.3 13.9L335.5 39.8 M331.3 13.9L303.1 24.6 M331.3 13.9L303.1 34.5 M331.3 13.9L325.7 59.9 M331.3 13.9L292.6 41.4 M331.3 13.9L414.6 17.4 M335.5 39.8L325.7 59.9 M335.5 39.8L331.3 13.9 M335.5 39.8L303.1 34.5 M252.8 65.7L257.6 63.6 M252.8 65.7L251.8 78.9 M252.8 65.7L252.8 79.6 M252.8 65.7L303.1 34.5 M252.8 79.6L251.8 78.9 M252.8 79.6L252.8 65.7 M252.8 79.6L257.6 63.6 M252.8 79.6L269.2 88.7 M252.8 79.6L229.7 98.0 M252.8 79.6L270.1 46.3 M252.8 79.6L300.7 64.6 M300.7 64.6L294.9 55.5 M300.7 64.6L293.6 43.7 M300.7 64.6L292.6 41.4 M325.7 59.9L335.5 39.8 M325.7 59.9L300.7 64.6 M325.7 59.9L294.9 55.5 M325.7 59.9L303.1 34.5 M325.7 59.9L293.6 43.7 M325.7 59.9L372.2 50.9 M544.3 68.2L544.6 93.4 M544.3 68.2L547.0 39.0 M544.3 68.2L535.1 105.4 M544.3 68.2L510.0 89.7 M544.3 68.2L521.1 101.6 M544.3 68.2L523.9 103.6 M544.3 68.2L561.0 23.7 M523.9 103.6L521.1 101.6 M523.9 103.6L532.6 110.0 M523.9 103.6L535.1 105.4 M523.9 103.6L538.9 110.3 M523.9 103.6L510.0 89.7 M532.6 110.0L535.1 105.4 M532.6 110.0L538.9 110.3 M532.6 110.0L523.9 103.6 M532.6 110.0L521.1 101.6 M532.6 110.0L544.6 93.4 M593.0 103.6L578.8 111.7 M593.0 103.6L597.2 79.3 M593.0 103.6L603.6 132.2 M593.0 103.6L565.0 137.8 M593.0 103.6L544.6 93.4 M593.0 103.6L548.8 154.7 M597.2 79.3L593.0 103.6 M597.2 79.3L578.8 111.7 M597.2 79.3L603.6 132.2 M597.2 79.3L544.3 68.2 M597.2 79.3L584.8 158.3 M603.6 132.2L609.7 159.2 M603.6 132.2L593.0 103.6 M603.6 132.2L584.8 158.3 M603.6 132.2L578.8 111.7 M603.6 132.2L585.0 164.1 M603.6 132.2L565.0 137.8 M609.7 159.2L584.8 158.3 M609.7 159.2L585.0 164.1 M609.7 159.2L603.6 132.2 M609.7 159.2L569.8 162.8 M561.0 23.7L547.0 39.0 M561.0 23.7L569.3 3.3 M561.0 23.7L547.9 3.3 M561.0 23.7L538.7 1.4 M561.0 23.7L529.0 26.4 M561.0 23.7L544.3 68.2 M547.0 39.0L561.0 23.7 M547.0 39.0L529.0 26.4 M547.0 39.0L544.3 68.2 M547.0 39.0L547.9 3.3 M547.0 39.0L538.7 1.4 M547.0 39.0L569.3 3.3 M529.0 26.4L547.0 39.0 M529.0 26.4L538.7 1.4 M529.0 26.4L547.9 3.3 M529.0 26.4L561.0 23.7 M449.6 25.6L448.2 18.0 M449.6 25.6L438.0 39.0 M449.6 25.6L428.0 21.3 M474.7 26.4L469.0 4.0 M474.7 26.4L462.1 47.9 M474.7 26.4L449.6 25.6 M474.7 26.4L448.2 18.0 M474.7 26.4L490.3 55.5 M474.7 26.4L457.5 59.9 M474.7 26.4L479.8 74.6 M462.1 47.9L457.5 59.9 M462.1 47.9L448.4 61.4 M462.1 47.9L474.7 26.4 M462.1 47.9L449.6 25.6 M462.1 47.9L438.0 39.0 M462.1 47.9L538.7 1.4 M545.6 152.3L548.8 154.7 M545.6 152.3L552.7 141.5 M545.6 152.3L567.4 152.6 M545.6 152.3L566.5 160.0 M545.6 152.3L609.7 159.2 M566.5 160.0L569.8 162.8 M566.5 160.0L567.4 152.6 M566.5 160.0L584.8 158.3 M566.5 160.0L548.8 154.7 M566.5 160.0L585.0 164.1 M566.5 160.0L538.9 110.3 M538.7 1.4L547.9 3.3 M538.7 1.4L529.0 26.4 M538.7 1.4L569.3 3.3 M538.7 1.4L561.0 23.7 M538.7 1.4L547.0 39.0 M538.7 1.4L449.6 25.6 M547.9 3.3L538.7 1.4 M547.9 3.3L569.3 3.3 M547.9 3.3L561.0 23.7 M547.9 3.3L529.0 26.4 M547.9 3.3L547.0 39.0 M547.9 3.3L535.1 105.4 M569.3 3.3L547.9 3.3 M569.3 3.3L561.0 23.7 M569.3 3.3L538.7 1.4 M569.3 3.3L593.0 103.6 M424.5 1.4L412.4 15.5 M424.5 1.4L414.6 17.4 M424.5 1.4L428.0 21.3 M424.5 1.4L529.0 26.4 M448.2 18.0L449.6 25.6 M448.2 18.0L428.0 21.3 M448.2 18.0L438.0 39.0 M448.2 18.0L469.0 4.0 M448.2 18.0L495.1 66.4 M469.0 4.0L474.7 26.4 M469.0 4.0L448.2 18.0 M469.0 4.0L449.6 25.6 M469.0 4.0L462.1 47.9 M469.0 4.0L428.0 21.3 M469.0 4.0L424.5 1.4 M469.0 4.0L544.3 68.2 M576.3 202.0L572.0 218.0 M576.3 202.0L577.3 219.2 M576.3 202.0L554.8 198.1 M576.3 202.0L554.0 192.9 M576.3 202.0L569.8 162.8 M554.0 192.9L554.8 198.1 M554.0 192.9L540.3 203.4 M554.0 192.9L576.3 202.0 M554.0 192.9L547.7 222.9 M554.0 192.9L572.0 218.0 M555.4 226.3L547.7 222.9 M555.4 226.3L560.4 236.9 M555.4 226.3L572.0 218.0 M555.4 226.3L542.8 241.8 M555.4 226.3L577.3 219.2 M555.4 226.3L543.7 267.2 M578.2 230.5L578.2 238.3 M578.2 230.5L577.3 219.2 M578.2 230.5L572.0 218.0 M578.2 230.5L560.4 236.9 M578.2 238.3L578.2 230.5 M578.2 238.3L560.4 236.9 M578.2 238.3L577.3 219.2 M578.2 238.3L597.7 246.6 M578.2 238.3L572.0 218.0 M578.2 238.3L598.5 253.3 M578.2 238.3L526.1 255.0 M560.4 236.9L555.4 226.3 M560.4 236.9L556.8 253.6 M560.4 236.9L578.2 238.3 M560.4 236.9L542.8 241.8 M560.4 236.9L598.5 253.3 M556.8 253.6L560.4 236.9 M556.8 253.6L542.8 241.8 M556.8 253.6L543.7 267.2 M556.8 253.6L512.7 260.5 M597.7 246.6L598.5 253.3 M597.7 246.6L611.6 248.6 M597.7 246.6L593.5 262.8 M597.7 246.6L578.2 238.3 M611.6 248.6L598.5 253.3 M611.6 248.6L597.7 246.6 M611.6 248.6L603.6 268.9 M611.6 248.6L593.5 262.8 M611.6 248.6L555.4 226.3 M598.5 253.3L597.7 246.6 M598.5 253.3L593.5 262.8 M598.5 253.3L611.6 248.6 M598.5 253.3L603.6 268.9 M598.5 253.3L586.0 267.5 M598.5 253.3L578.2 238.3 M598.5 253.3L529.6 263.3 M593.5 262.8L586.0 267.5 M593.5 262.8L598.5 253.3 M593.5 262.8L603.6 268.9 M593.5 262.8L597.7 246.6 M593.5 262.8L610.0 276.7 M593.5 262.8L611.6 248.6 M586.0 267.5L593.5 262.8 M586.0 267.5L603.6 268.9 M586.0 267.5L598.5 253.3 M586.0 267.5L547.7 222.9 M603.6 268.9L610.0 276.7 M603.6 268.9L593.5 262.8 M603.6 268.9L598.5 253.3 M603.6 268.9L586.0 267.5 M603.6 268.9L611.6 248.6 M603.6 268.9L597.7 246.6 M610.0 276.7L603.6 268.9 M610.0 276.7L593.5 262.8 M610.0 276.7L586.0 267.5 M610.0 276.7L598.5 253.3 M610.0 276.7L611.6 248.6 M610.0 276.7L597.7 246.6 M610.0 276.7L534.0 265.8 M612.5 311.2L610.0 276.7 M612.5 311.2L591.6 341.8 M612.5 311.2L603.6 268.9 M612.5 311.2L566.5 313.4 M612.5 311.2L586.0 267.5 M612.5 311.2L593.5 262.8 M566.5 313.4L558.0 339.0 M566.5 313.4L591.6 341.8 M566.5 313.4L525.1 305.2 M566.5 313.4L612.5 311.2 M543.7 267.2L534.0 265.8 M543.7 267.2L529.6 263.3 M543.7 267.2L556.8 253.6 M543.7 267.2L526.1 255.0 M543.7 267.2L572.0 218.0 M534.0 265.8L529.6 263.3 M534.0 265.8L543.7 267.2 M534.0 265.8L526.1 255.0 M611.0 216.5L611.6 248.6 M611.0 216.5L597.7 246.6 M611.0 216.5L577.3 219.2 M611.0 216.5L578.2 230.5 M611.0 216.5L576.3 202.0 M611.0 216.5L598.5 253.3 M611.0 216.5L593.5 262.8 M572.0 218.0L577.3 219.2 M572.0 218.0L578.2 230.5 M572.0 218.0L576.3 202.0 M591.6 341.8L558.0 339.0 M591.6 341.8L612.5 311.2 M591.6 341.8L566.5 313.4 M591.6 341.8L610.0 276.7 M558.0 339.0L566.5 313.4 M558.0 339.0L591.6 341.8 M558.0 339.0L525.1 305.2 M299.8 321.6L305.5 327.4 M299.8 321.6L292.0 327.7 M299.8 321.6L294.0 302.6 M299.8 321.6L307.8 302.7 M299.8 321.6L314.9 300.1 M542.8 241.8L560.4 236.9 M542.8 241.8L556.8 253.6 M542.8 241.8L547.7 222.9 M542.8 241.8L555.4 226.3 M542.8 241.8L526.1 255.0 M547.7 222.9L555.4 226.3 M547.7 222.9L560.4 236.9 M547.7 222.9L542.8 241.8 M547.7 222.9L540.3 203.4 M547.7 222.9L572.0 218.0 M547.7 222.9L554.8 198.1 M230.1 230.1L215.6 217.8 M230.1 230.1L225.0 204.9 M230.1 230.1L231.7 257.9 M230.1 230.1L262.2 279.3 M183.4 237.4L164.3 250.8 M183.4 237.4L175.4 261.9 M183.4 237.4L179.6 210.1 M183.4 237.4L189.9 206.2 M183.4 237.4L230.1 230.1 M212.9 96.9L211.5 98.3 M212.9 96.9L202.9 102.4 M212.9 96.9L199.9 98.3 M212.9 96.9L257.6 63.6 M577.3 219.2L572.0 218.0 M577.3 219.2L578.2 230.5 M577.3 219.2L576.3 202.0 M577.3 219.2L578.2 238.3 M577.3 219.2L555.4 226.3 M577.3 219.2L560.4 236.9 M577.3 219.2L586.0 267.5 M469.9 288.0L467.2 287.5 M469.9 288.0L476.7 278.2 M469.9 288.0L479.8 278.3 M469.9 288.0L485.5 282.7 M469.9 288.0L459.0 323.9 M438.0 39.0L427.7 52.0 M438.0 39.0L449.6 25.6 M438.0 39.0L428.0 21.3 M438.0 39.0L448.2 18.0 M438.0 39.0L529.0 26.4 M257.6 63.6L252.8 65.7 M257.6 63.6L251.8 78.9 M257.6 63.6L252.8 79.6 M257.6 63.6L270.1 46.3 M257.6 63.6L255.7 39.1 M257.6 63.6L229.7 98.0 M514.6 230.3L513.9 221.3 M514.6 230.3L494.1 229.4 M514.6 230.3L514.5 251.2 M514.6 230.3L516.7 251.8 M514.6 230.3L526.1 255.0 M514.6 230.3L512.7 260.5 M294.9 55.5L300.7 64.6 M294.9 55.5L293.6 43.7 M294.9 55.5L292.6 41.4 M294.9 55.5L289.5 38.1 M294.9 55.5L303.1 34.5 M294.9 55.5L270.1 46.3 M294.9 55.5L252.8 79.6 M214.0 110.1L211.5 98.3 M214.0 110.1L212.9 96.9 M214.0 110.1L202.9 102.4 M214.0 110.1L199.9 98.3 M214.0 110.1L208.4 127.8 M214.0 110.1L229.7 98.0 M427.7 52.0L438.0 39.0 M427.7 52.0L448.4 61.4 M427.7 52.0L428.0 21.3 M427.7 52.0L457.5 59.9 M427.7 52.0L469.0 4.0 M202.9 102.4L199.9 98.3 M202.9 102.4L211.5 98.3 M202.9 102.4L212.9 96.9 M202.9 102.4L214.0 110.1 M202.9 102.4L183.4 107.9 M202.9 102.4L208.4 127.8 M202.9 102.4L252.8 65.7 M349.9 2.7L331.3 13.9 M349.9 2.7L335.5 39.8 M349.9 2.7L398.1 15.3 M349.9 2.7L303.1 24.6 M349.9 2.7L428.0 21.3 M505.7 291.4L506.8 295.2 M505.7 291.4L494.1 283.6 M505.7 291.4L486.5 291.2 M505.7 291.4L467.2 287.5 M479.8 278.3L476.7 278.2 M479.8 278.3L485.5 282.7 M479.8 278.3L487.9 283.3 M479.8 278.3L469.9 288.0 M479.8 278.3L486.5 291.2 M270.1 46.3L269.5 41.8 M270.1 46.3L255.7 39.1 M270.1 46.3L289.5 38.1 M270.1 46.3L257.6 63.6 M270.1 46.3L269.2 88.7 M495.1 66.4L490.3 55.5 M495.1 66.4L484.2 71.6 M495.1 66.4L479.8 74.6 M495.1 66.4L510.0 89.7 M495.1 66.4L462.1 47.9 M211.5 98.3L212.9 96.9 M211.5 98.3L202.9 102.4 M211.5 98.3L199.9 98.3 M211.5 98.3L214.0 110.1 M211.5 98.3L229.7 98.0 M211.5 98.3L222.2 158.6 M490.3 55.5L495.1 66.4 M490.3 55.5L484.2 71.6 M490.3 55.5L479.8 74.6 M490.3 55.5L462.1 47.9 M292.6 41.4L293.6 43.7 M292.6 41.4L289.5 38.1 M292.6 41.4L303.1 34.5 M292.6 41.4L294.9 55.5 M292.6 41.4L303.1 24.6 M292.6 41.4L270.1 46.3 M292.6 41.4L255.7 39.1 M236.8 45.1L255.7 39.1 M236.8 45.1L252.8 65.7 M236.8 45.1L257.6 63.6 M236.8 45.1L269.5 41.8 M333.4 335.7L327.2 328.8 M333.4 335.7L346.5 333.3 M333.4 335.7L332.7 309.2 M333.4 335.7L292.0 327.7 M554.8 198.1L554.0 192.9 M554.8 198.1L540.3 203.4 M554.8 198.1L576.3 202.0 M554.8 198.1L547.7 222.9 M554.8 198.1L572.0 218.0 M554.8 198.1L555.4 226.3 M554.8 198.1L560.4 236.9 M486.5 291.2L487.9 283.3 M486.5 291.2L485.5 282.7 M486.5 291.2L494.1 283.6 M486.5 291.2L484.6 304.7 M486.5 291.2L442.0 272.7 M487.9 283.3L485.5 282.7 M487.9 283.3L494.1 283.6 M487.9 283.3L486.5 291.2 M479.8 74.6L484.2 71.6 M479.8 74.6L495.1 66.4 M479.8 74.6L490.3 55.5 M479.8 74.6L457.5 59.9 M479.8 74.6L427.7 52.0 M166.1 128.4L162.9 133.6 M166.1 128.4L175.7 137.5 M166.1 128.4L182.4 147.6 M166.1 128.4L183.4 107.9 M166.1 128.4L194.9 149.5 M166.1 128.4L208.4 127.8 M166.1 128.4L192.6 182.9 M484.2 71.6L479.8 74.6 M484.2 71.6L495.1 66.4 M484.2 71.6L490.3 55.5 M484.2 71.6L457.5 59.9 M484.2 71.6L510.0 89.7 M235.4 317.5L240.9 309.7 M235.4 317.5L233.3 288.9 M235.4 317.5L206.0 292.3 M235.4 317.5L267.6 288.3 M235.4 317.5L262.2 279.3 M235.4 317.5L272.3 281.0 M235.4 317.5L270.3 278.5 M467.2 287.5L469.9 288.0 M467.2 287.5L476.7 278.2 M467.2 287.5L479.8 278.3 M467.2 287.5L419.0 293.2 M391.5 333.7L381.4 325.3 M391.5 333.7L404.8 331.0 M391.5 333.7L377.6 334.0 M391.5 333.7L369.5 320.6 M391.5 333.7L413.6 314.4 M391.5 333.7L360.0 323.5 M360.0 323.5L369.5 320.6 M360.0 323.5L359.6 308.0 M360.0 323.5L346.5 333.3 M240.9 309.7L235.4 317.5 M240.9 309.7L233.3 288.9 M240.9 309.7L267.6 288.3 M240.9 309.7L262.2 279.3 M240.9 309.7L290.5 268.6 M303.1 34.5L303.1 24.6 M303.1 34.5L292.6 41.4 M303.1 34.5L293.6 43.7 M303.1 34.5L289.5 38.1 M303.1 34.5L294.9 55.5 M303.1 34.5L300.7 64.6 M303.1 34.5L398.1 15.3 M303.1 24.6L303.1 34.5 M303.1 24.6L289.5 38.1 M303.1 24.6L292.6 41.4 M303.1 24.6L293.6 43.7 M303.1 24.6L251.8 78.9 M412.4 15.5L414.6 17.4 M412.4 15.5L398.1 15.3 M412.4 15.5L428.0 21.3 M412.4 15.5L424.5 1.4 M412.4 15.5L325.7 59.9 M231.7 257.9L228.1 259.0 M231.7 257.9L211.7 258.8 M231.7 257.9L230.1 230.1 M269.2 88.7L252.8 79.6 M269.2 88.7L251.8 78.9 M269.2 88.7L257.6 63.6 M269.2 88.7L252.8 65.7 M413.6 314.4L426.3 328.0 M413.6 314.4L404.8 331.0 M413.6 314.4L419.0 293.2 M413.6 314.4L428.9 330.3 M413.6 314.4L438.8 317.8 M413.6 314.4L433.3 333.0 M413.6 314.4L391.5 333.7 M513.9 221.3L514.6 230.3 M513.9 221.3L494.1 229.4 M513.9 221.3L514.5 251.2 M513.9 221.3L516.7 251.8 M513.9 221.3L540.3 203.4 M513.9 221.3L547.7 222.9 M513.9 221.3L484.5 241.8 M514.5 251.2L516.7 251.8 M514.5 251.2L512.7 260.5 M514.5 251.2L526.1 255.0 M514.5 251.2L529.6 263.3 M514.5 251.2L514.6 230.3 M514.5 251.2L542.8 241.8 M510.0 89.7L521.1 101.6 M510.0 89.7L523.9 103.6 M510.0 89.7L495.1 66.4 M510.0 89.7L535.1 105.4 M510.0 89.7L532.6 110.0 M510.0 89.7L448.4 61.4 M369.5 320.6L360.0 323.5 M369.5 320.6L381.4 325.3 M369.5 320.6L377.6 334.0 M369.5 320.6L426.3 328.0 M525.1 305.2L506.8 295.2 M525.1 305.2L505.7 291.4 M525.1 305.2L494.1 283.6 M525.1 305.2L534.0 265.8 M525.1 305.2L484.6 304.7 M525.1 305.2L487.9 283.3 M189.9 206.2L188.0 197.8 M189.9 206.2L180.9 200.8 M189.9 206.2L179.6 210.1 M512.7 260.5L514.5 251.2 M512.7 260.5L516.7 251.8 M512.7 260.5L526.1 255.0 M512.7 260.5L556.8 253.6 M449.1 74.9L448.4 61.4 M449.1 74.9L457.5 59.9 M449.1 74.9L462.1 47.9 M449.1 74.9L479.8 74.6 M449.1 74.9L427.7 52.0 M449.1 74.9L484.2 71.6 M552.7 141.5L565.0 137.8 M552.7 141.5L545.6 152.3 M552.7 141.5L548.8 154.7 M552.7 141.5L567.4 152.6 M552.7 141.5L566.5 160.0 M552.7 141.5L569.8 162.8 M225.5 139.6L219.6 144.2 M225.5 139.6L215.3 130.0 M225.5 139.6L222.2 158.6 M225.5 139.6L208.4 127.8 M584.8 158.3L585.0 164.1 M584.8 158.3L569.8 162.8 M584.8 158.3L567.4 152.6 M584.8 158.3L566.5 160.0 M584.8 158.3L577.3 219.2 M359.6 308.0L361.3 305.9 M359.6 308.0L372.0 302.6 M359.6 308.0L360.0 323.5 M359.6 308.0L369.5 320.6 M398.1 15.3L412.4 15.5 M398.1 15.3L414.6 17.4 M398.1 15.3L424.5 1.4 M398.1 15.3L428.0 21.3 M398.1 15.3L372.2 50.9 M292.0 327.7L299.8 321.6 M292.0 327.7L305.5 327.4 M292.0 327.7L294.0 302.6 M292.0 327.7L307.8 302.7 M292.0 327.7L327.2 328.8 M292.0 327.7L314.9 300.1 M292.0 327.7L267.6 288.3 M585.0 164.1L584.8 158.3 M585.0 164.1L569.8 162.8 M585.0 164.1L566.5 160.0 M585.0 164.1L567.4 152.6 M585.0 164.1L554.8 198.1 M457.5 59.9L448.4 61.4 M457.5 59.9L462.1 47.9 M457.5 59.9L449.1 74.9 M457.5 59.9L479.8 74.6 M457.5 59.9L449.6 25.6 M196.4 166.8L191.3 174.8 M196.4 166.8L192.6 182.9 M196.4 166.8L194.9 149.5 M196.4 166.8L182.4 147.6 M196.4 166.8L199.3 192.4 M196.4 166.8L222.2 158.6 M540.3 203.4L554.8 198.1 M540.3 203.4L554.0 192.9 M540.3 203.4L547.7 222.9 M540.3 203.4L555.4 226.3 M540.3 203.4L513.9 221.3 M540.3 203.4L516.7 251.8 M293.6 43.7L292.6 41.4 M293.6 43.7L289.5 38.1 M293.6 43.7L294.9 55.5 M578.8 111.7L593.0 103.6 M578.8 111.7L565.0 137.8 M578.8 111.7L603.6 132.2 M578.8 111.7L597.2 79.3 M578.8 111.7L544.6 93.4 M262.2 279.3L270.3 278.5 M262.2 279.3L272.3 281.0 M262.2 279.3L267.6 288.3 M262.2 279.3L281.5 292.8 M262.2 279.3L215.6 217.8 M426.3 328.0L428.9 330.3 M426.3 328.0L433.3 333.0 M426.3 328.0L438.8 317.8 M426.3 328.0L413.6 314.4 M426.3 328.0L404.8 331.0 M426.3 328.0L435.7 297.1 M426.3 328.0L387.9 300.5 M544.6 93.4L535.1 105.4 M544.6 93.4L538.9 110.3 M544.6 93.4L532.6 110.0 M544.6 93.4L523.9 103.6 M544.6 93.4L521.1 101.6 M544.6 93.4L544.3 68.2 M544.6 93.4L545.6 152.3 M251.8 78.9L252.8 79.6 M251.8 78.9L252.8 65.7 M251.8 78.9L257.6 63.6 M255.7 39.1L269.5 41.8 M255.7 39.1L270.1 46.3 M255.7 39.1L236.8 45.1 M255.7 39.1L257.6 63.6 M255.7 39.1L252.8 65.7 M255.7 39.1L269.2 88.7 M372.2 50.9L335.5 39.8 M372.2 50.9L398.1 15.3 M372.2 50.9L325.7 59.9 M372.2 50.9L349.9 2.7 M372.2 50.9L412.4 15.5 M372.2 50.9L294.9 55.5 M414.6 17.4L412.4 15.5 M414.6 17.4L428.0 21.3 M414.6 17.4L398.1 15.3 M414.6 17.4L424.5 1.4 M414.6 17.4L457.5 59.9 M548.8 154.7L545.6 152.3 M548.8 154.7L552.7 141.5 M548.8 154.7L566.5 160.0 M548.8 154.7L567.4 152.6 M548.8 154.7L523.9 103.6 M565.0 137.8L552.7 141.5 M565.0 137.8L567.4 152.6 M565.0 137.8L566.5 160.0 M565.0 137.8L548.8 154.7 M565.0 137.8L554.8 198.1 M484.6 304.7L486.5 291.2 M484.6 304.7L487.9 283.3 M484.6 304.7L485.5 282.7 M484.6 304.7L469.9 288.0 M484.6 304.7L494.1 283.6 M428.0 21.3L414.6 17.4 M428.0 21.3L412.4 15.5 M428.0 21.3L424.5 1.4 M428.0 21.3L438.0 39.0 M569.8 162.8L566.5 160.0 M569.8 162.8L567.4 152.6 M569.8 162.8L585.0 164.1 M219.6 144.2L225.5 139.6 M219.6 144.2L222.2 158.6 M219.6 144.2L215.3 130.0 M219.6 144.2L162.9 133.6 M567.4 152.6L566.5 160.0 M567.4 152.6L569.8 162.8 M567.4 152.6L565.0 137.8 M567.4 152.6L584.8 158.3 M538.9 110.3L535.1 105.4 M538.9 110.3L532.6 110.0 M538.9 110.3L523.9 103.6 M538.9 110.3L544.6 93.4 M538.9 110.3L521.1 101.6 M538.9 110.3L495.1 66.4 M448.4 61.4L457.5 59.9 M448.4 61.4L449.1 74.9 M448.4 61.4L462.1 47.9 M448.4 61.4L427.7 52.0 M448.4 61.4L414.6 17.4 M327.2 328.8L333.4 335.7 M327.2 328.8L346.5 333.3 M327.2 328.8L332.7 309.2 M327.2 328.8L305.5 327.4 M361.3 305.9L359.6 308.0 M361.3 305.9L372.0 302.6 M361.3 305.9L369.5 320.6 M361.3 305.9L360.0 323.5 M361.3 305.9L344.8 284.5 M521.1 101.6L523.9 103.6 M521.1 101.6L532.6 110.0 M521.1 101.6L535.1 105.4 M521.1 101.6L510.0 89.7 M521.1 101.6L548.8 154.7 M183.4 107.9L199.9 98.3 M183.4 107.9L202.9 102.4 M183.4 107.9L166.1 128.4 M183.4 107.9L222.2 158.6 M535.1 105.4L532.6 110.0 M535.1 105.4L538.9 110.3 M535.1 105.4L523.9 103.6 M535.1 105.4L521.1 101.6 M535.1 105.4L479.8 74.6 M222.2 158.6L219.6 144.2 M222.2 158.6L225.5 139.6 M222.2 158.6L196.4 166.8 M222.2 158.6L194.9 149.5 M222.2 158.6L214.0 110.1 M433.3 333.0L428.9 330.3 M433.3 333.0L426.3 328.0 M433.3 333.0L438.8 317.8 M459.0 323.9L438.8 317.8 M459.0 323.9L433.3 333.0 M459.0 323.9L428.9 330.3 M459.0 323.9L484.6 304.7 M208.4 127.8L215.3 130.0 M208.4 127.8L214.0 110.1 M208.4 127.8L219.6 144.2 M208.4 127.8L225.5 139.6 M208.4 127.8L194.9 149.5 M208.4 127.8L192.6 182.9 M175.7 137.5L182.4 147.6 M175.7 137.5L166.1 128.4 M175.7 137.5L162.9 133.6 M175.7 137.5L194.9 149.5 M215.3 130.0L208.4 127.8 M215.3 130.0L225.5 139.6 M215.3 130.0L219.6 144.2 M215.3 130.0L199.3 192.4 M281.5 292.8L267.6 288.3 M281.5 292.8L272.3 281.0 M281.5 292.8L294.0 302.6 M281.5 292.8L291.5 277.9 M281.5 292.8L270.3 278.5 M281.5 292.8L262.2 279.3 M281.5 292.8L292.0 327.7 M267.6 288.3L272.3 281.0 M267.6 288.3L270.3 278.5 M267.6 288.3L262.2 279.3 M267.6 288.3L281.5 292.8 M267.6 288.3L291.5 277.9 M267.6 288.3L294.0 302.6 M332.7 309.2L314.9 300.1 M332.7 309.2L327.2 328.8 M332.7 309.2L307.8 302.7 M332.7 309.2L333.4 335.7 M307.8 302.7L314.9 300.1 M307.8 302.7L294.0 302.6 M307.8 302.7L299.8 321.6 M381.4 325.3L377.6 334.0 M381.4 325.3L369.5 320.6 M381.4 325.3L391.5 333.7 M381.4 325.3L360.0 323.5 M381.4 325.3L404.8 331.0 M381.4 325.3L372.0 302.6 M228.1 259.0L231.7 257.9 M228.1 259.0L211.7 258.8 M228.1 259.0L230.1 230.1 M228.1 259.0L233.3 288.9 M228.1 259.0L262.2 279.3 M228.1 259.0L206.0 292.3 M346.5 333.3L333.4 335.7 M346.5 333.3L360.0 323.5 M346.5 333.3L327.2 328.8 M346.5 333.3L369.5 320.6 M346.5 333.3L332.7 309.2 M346.5 333.3L381.4 325.3 M464.9 269.9L476.7 278.2 M464.9 269.9L479.8 278.3 M464.9 269.9L467.2 287.5 M464.9 269.9L469.9 288.0 M464.9 269.9L442.0 272.7 M484.5 241.8L485.7 246.1 M484.5 241.8L479.9 246.2 M484.5 241.8L494.1 229.4 M484.5 241.8L514.5 251.2 M484.5 241.8L514.6 230.3 M484.5 241.8L464.9 269.9 M305.5 327.4L299.8 321.6 M305.5 327.4L292.0 327.7 M305.5 327.4L327.2 328.8 M305.5 327.4L307.8 302.7 M305.5 327.4L294.0 302.6 M494.1 283.6L487.9 283.3 M494.1 283.6L485.5 282.7 M494.1 283.6L486.5 291.2 M494.1 283.6L505.7 291.4 M494.1 283.6L479.8 278.3 M494.1 283.6L506.8 295.2 M506.8 295.2L505.7 291.4 M506.8 295.2L494.1 283.6 M506.8 295.2L486.5 291.2 M506.8 295.2L525.1 305.2 M485.5 282.7L487.9 283.3 M485.5 282.7L479.8 278.3 M485.5 282.7L486.5 291.2 M485.5 282.7L494.1 283.6 M485.5 282.7L476.7 278.2 M485.5 282.7L469.9 288.0 M377.6 334.0L381.4 325.3 M377.6 334.0L391.5 333.7 M377.6 334.0L369.5 320.6 M377.6 334.0L360.0 323.5 M377.6 334.0L404.8 331.0 M377.6 334.0L346.5 333.3 M377.6 334.0L387.9 300.5 M476.7 278.2L479.8 278.3 M476.7 278.2L485.5 282.7 M476.7 278.2L469.9 288.0 M476.7 278.2L487.9 283.3 M476.7 278.2L467.2 287.5 M476.7 278.2L464.9 269.9 M419.0 293.2L435.7 297.1 M419.0 293.2L413.6 314.4 M419.0 293.2L447.2 288.1 M419.0 293.2L442.0 272.7 M419.0 293.2L438.8 317.8 M419.0 293.2L467.2 287.5 M314.9 300.1L307.8 302.7 M314.9 300.1L332.7 309.2 M314.9 300.1L294.0 302.6 M314.9 300.1L328.7 280.3 M314.9 300.1L381.4 325.3 M387.9 300.5L382.8 286.7 M387.9 300.5L372.0 302.6 M387.9 300.5L381.4 325.3 M387.9 300.5L361.3 305.9 M328.7 280.3L344.8 284.5 M328.7 280.3L314.9 300.1 M328.7 280.3L332.7 309.2 M328.7 280.3L307.8 302.7 M328.7 280.3L291.5 277.9 M328.7 280.3L290.5 268.6 M328.7 280.3L272.3 281.0 M211.7 258.8L228.1 259.0 M211.7 258.8L231.7 257.9 M211.7 258.8L206.0 292.3 M211.7 258.8L230.1 230.1 M211.7 258.8L215.1 201.2 M479.9 246.2L485.7 246.1 M479.9 246.2L484.5 241.8 M479.9 246.2L494.1 229.4 M479.9 246.2L464.9 269.9 M290.5 268.6L291.5 277.9 M290.5 268.6L272.3 281.0 M290.5 268.6L270.3 278.5 M290.5 268.6L211.7 258.8 M404.8 331.0L391.5 333.7 M404.8 331.0L413.6 314.4 M404.8 331.0L426.3 328.0 M404.8 331.0L428.9 330.3 M404.8 331.0L438.8 317.8 M438.8 317.8L428.9 330.3 M438.8 317.8L426.3 328.0 M438.8 317.8L433.3 333.0 M438.8 317.8L435.7 297.1 M438.8 317.8L459.0 323.9 M438.8 317.8L413.6 314.4 M438.8 317.8L381.4 325.3 M344.8 284.5L328.7 280.3 M344.8 284.5L361.3 305.9 M344.8 284.5L332.7 309.2 M516.7 251.8L514.5 251.2 M516.7 251.8L512.7 260.5 M516.7 251.8L526.1 255.0 M516.7 251.8L529.6 263.3 M529.6 263.3L534.0 265.8 M529.6 263.3L526.1 255.0 M529.6 263.3L543.7 267.2 M529.6 263.3L512.7 260.5 M294.0 302.6L307.8 302.7 M294.0 302.6L281.5 292.8 M294.0 302.6L299.8 321.6 M294.0 302.6L314.9 300.1 M526.1 255.0L529.6 263.3 M526.1 255.0L516.7 251.8 M526.1 255.0L514.5 251.2 M526.1 255.0L534.0 265.8 M428.9 330.3L426.3 328.0 M428.9 330.3L433.3 333.0 M428.9 330.3L438.8 317.8 M428.9 330.3L476.7 278.2 M435.7 297.1L447.2 288.1 M435.7 297.1L419.0 293.2 M435.7 297.1L438.8 317.8 M435.7 297.1L442.0 272.7 M435.7 297.1L433.3 333.0 M442.0 272.7L447.2 288.1 M442.0 272.7L464.9 269.9 M442.0 272.7L435.7 297.1 M442.0 272.7L467.2 287.5 M442.0 272.7L413.6 314.4 M485.7 246.1L484.5 241.8 M485.7 246.1L479.9 246.2 M485.7 246.1L494.1 229.4 M447.2 288.1L435.7 297.1 M447.2 288.1L442.0 272.7 M447.2 288.1L467.2 287.5 M372.0 302.6L361.3 305.9 M372.0 302.6L359.6 308.0 M372.0 302.6L387.9 300.5 M372.0 302.6L369.5 320.6 M372.0 302.6L382.8 286.7 M372.0 302.6L435.7 297.1 M494.1 229.4L484.5 241.8 M494.1 229.4L485.7 246.1 M494.1 229.4L514.6 230.3 M494.1 229.4L513.9 221.3 M494.1 229.4L479.9 246.2 M291.5 277.9L290.5 268.6 M291.5 277.9L281.5 292.8 M291.5 277.9L272.3 281.0 M291.5 277.9L270.3 278.5 M291.5 277.9L294.0 302.6 M382.8 286.7L387.9 300.5 M382.8 286.7L372.0 302.6 M382.8 286.7L361.3 305.9 M382.8 286.7L359.6 308.0 M382.8 286.7L369.5 320.6 M382.8 286.7L419.0 293.2 M382.8 286.7L442.0 272.7 M272.3 281.0L270.3 278.5 M272.3 281.0L267.6 288.3 M272.3 281.0L262.2 279.3 M272.3 281.0L281.5 292.8 M272.3 281.0L291.5 277.9 M272.3 281.0L290.5 268.6 M270.3 278.5L272.3 281.0 M270.3 278.5L262.2 279.3 M270.3 278.5L267.6 288.3 M270.3 278.5L281.5 292.8 M270.3 278.5L344.8 284.5 M76.1 186.3L75.7 184.5 M76.1 186.3L90.2 182.0 M76.1 186.3L91.9 199.8 M76.1 186.3L78.0 211.0 M76.1 186.3L100.7 200.5 M76.1 186.3L93.3 218.2 M76.1 186.3L145.3 246.6 M113.2 182.3L116.4 185.4 M113.2 182.3L120.6 186.6 M113.2 182.3L124.2 179.5 M113.2 182.3L126.6 192.4 M170.1 188.8L171.8 189.1 M170.1 188.8L156.4 190.8 M170.1 188.8L157.5 180.1 M170.1 188.8L180.9 200.8 M170.1 188.8L153.6 199.9 M170.1 188.8L188.0 197.8 M170.1 188.8L189.9 206.2 M215.6 217.8L211.5 207.4 M215.6 217.8L225.0 204.9 M215.6 217.8L215.1 201.2 M215.6 217.8L208.8 201.4 M215.6 217.8L230.1 230.1 M215.6 217.8L188.0 197.8 M199.3 192.4L194.6 195.7 M199.3 192.4L207.2 193.4 M199.3 192.4L192.6 182.9 M199.3 192.4L188.0 197.8 M199.3 192.4L208.8 201.4 M199.3 192.4L189.9 206.2 M90.2 182.0L75.7 184.5 M90.2 182.0L76.1 186.3 M90.2 182.0L91.9 199.8 M90.2 182.0L130.3 183.3 M188.0 197.8L194.6 195.7 M188.0 197.8L180.9 200.8 M188.0 197.8L189.9 206.2 M194.6 195.7L199.3 192.4 M194.6 195.7L188.0 197.8 M194.6 195.7L189.9 206.2 M194.6 195.7L207.2 193.4 M194.6 195.7L192.6 182.9 M93.3 218.2L103.8 224.9 M93.3 218.2L78.0 211.0 M93.3 218.2L91.9 199.8 M93.3 218.2L157.5 180.1 M180.9 200.8L188.0 197.8 M180.9 200.8L179.6 210.1 M180.9 200.8L189.9 206.2 M180.9 200.8L194.6 195.7 M180.9 200.8L171.8 189.1 M180.9 200.8L170.1 188.8 M171.8 189.1L170.1 188.8 M171.8 189.1L180.9 200.8 M171.8 189.1L156.4 190.8 M171.8 189.1L157.5 180.1 M171.8 189.1L191.3 174.8 M153.6 199.9L156.4 190.8 M153.6 199.9L155.9 210.1 M153.6 199.9L144.4 206.4 M153.6 199.9L199.3 192.4 M156.4 190.8L153.6 199.9 M156.4 190.8L157.5 180.1 M156.4 190.8L170.1 188.8 M156.4 190.8L142.2 185.6 M156.4 190.8L171.8 189.1 M208.8 201.4L215.1 201.2 M208.8 201.4L211.5 207.4 M208.8 201.4L207.2 193.4 M208.8 201.4L199.3 192.4 M225.0 204.9L215.1 201.2 M225.0 204.9L211.5 207.4 M225.0 204.9L215.6 217.8 M225.0 204.9L208.8 201.4 M225.0 204.9L228.1 259.0 M144.4 206.4L153.6 199.9 M144.4 206.4L155.9 210.1 M144.4 206.4L130.8 194.3 M144.4 206.4L156.4 190.8 M144.4 206.4L142.2 185.6 M144.4 206.4L180.9 200.8 M120.6 186.6L116.4 185.4 M120.6 186.6L124.2 179.5 M120.6 186.6L126.6 192.4 M120.6 186.6L113.2 182.3 M120.6 186.6L130.3 183.3 M120.6 186.6L130.8 194.3 M120.6 186.6L180.9 200.8 M157.5 180.1L156.4 190.8 M157.5 180.1L170.1 188.8 M157.5 180.1L142.2 185.6 M157.5 180.1L171.8 189.1 M157.5 180.1L153.6 199.9 M157.5 180.1L130.3 183.3 M157.5 180.1L179.6 210.1 M191.3 174.8L192.6 182.9 M191.3 174.8L196.4 166.8 M191.3 174.8L199.3 192.4 M191.3 174.8L194.6 195.7 M191.3 174.8L194.9 149.5 M207.2 193.4L199.3 192.4 M207.2 193.4L208.8 201.4 M207.2 193.4L215.1 201.2 M207.2 193.4L194.6 195.7 M207.2 193.4L196.4 166.8 M124.2 179.5L130.3 183.3 M124.2 179.5L120.6 186.6 M124.2 179.5L116.4 185.4 M124.2 179.5L113.2 182.3 M124.2 179.5L126.6 192.4 M192.6 182.9L191.3 174.8 M192.6 182.9L199.3 192.4 M192.6 182.9L194.6 195.7 M192.6 182.9L188.0 197.8 M192.6 182.9L196.4 166.8 M192.6 182.9L207.2 193.4 M192.6 182.9L157.5 180.1 M100.7 200.5L91.9 199.8 M100.7 200.5L93.3 218.2 M100.7 200.5L90.2 182.0 M130.3 183.3L124.2 179.5 M130.3 183.3L126.6 192.4 M130.3 183.3L120.6 186.6 M116.4 185.4L120.6 186.6 M116.4 185.4L113.2 182.3 M116.4 185.4L124.2 179.5 M116.4 185.4L126.6 192.4 M116.4 185.4L130.3 183.3 M211.5 207.4L208.8 201.4 M211.5 207.4L215.1 201.2 M211.5 207.4L215.6 217.8 M211.5 207.4L225.0 204.9 M211.5 207.4L207.2 193.4 M211.5 207.4L199.3 192.4 M118.5 212.4L103.8 224.9 M118.5 212.4L100.7 200.5 M118.5 212.4L126.6 192.4 M118.5 212.4L164.3 250.8 M126.6 192.4L130.8 194.3 M126.6 192.4L120.6 186.6 M126.6 192.4L130.3 183.3 M126.6 192.4L116.4 185.4 M126.6 192.4L124.2 179.5 M126.6 192.4L113.2 182.3 M215.1 201.2L208.8 201.4 M215.1 201.2L211.5 207.4 M215.1 201.2L225.0 204.9 M215.1 201.2L207.2 193.4 M215.1 201.2L215.6 217.8 M215.1 201.2L183.4 237.4 M142.2 185.6L130.3 183.3 M142.2 185.6L130.8 194.3 M142.2 185.6L156.4 190.8 M142.2 185.6L157.5 180.1 M142.2 185.6L116.4 185.4 M75.7 184.5L89.1 311.2 M89.1 311.2L182.4 306.5 M182.4 306.5L233.3 288.9 M162.9 133.6L75.7 184.5 M170.4 48.7L240.0 1.4 M240.0 1.4L269.5 41.8 M269.5 41.8L170.4 48.7 M170.4 48.7L175.4 79.3 M175.4 79.3L162.9 133.6 M162.9 133.6L199.9 98.3 M199.9 98.3L170.4 48.7 M170.4 48.7L229.7 98.0 M229.7 98.0L175.4 79.3 M538.7 1.4L547.0 39.0 M547.0 39.0L593.0 103.6 M593.0 103.6L603.6 132.2 M603.6 132.2L611.0 216.5 M611.0 216.5L576.3 202.0 M576.3 202.0L593.0 103.6 M593.0 103.6L544.3 68.2 M544.3 68.2L547.0 39.0 M611.0 216.5L612.5 311.2 M612.5 311.2L591.6 341.8 M591.6 341.8L558.0 339.0 M558.0 339.0L566.5 313.4 M566.5 313.4L612.5 311.2" stroke="#8fb6f3" stroke-opacity=".62" stroke-width=".75" fill="none"/>
<path d="M176.8 192.3C175.3 173.1 174.9 182.9 179.0 164.1C183.2 145.3 180.5 152.8 189.2 135.8C197.9 118.9 193.7 126.8 205.0 113.2C216.3 99.7 210.3 105.7 223.1 95.2C235.9 84.6 229.1 89.9 243.4 81.6C257.8 73.3 250.2 77.8 266.0 70.3C281.9 62.8 273.2 65.4 290.9 59.0C308.6 52.6 300.3 55.6 319.1 51.1C338.0 46.6 327.4 48.5 347.4 45.4C367.4 42.4 358.3 42.8 379.0 42.1C399.8 41.3 389.2 40.9 409.6 43.2C429.9 45.4 420.1 43.6 440.1 48.8C460.0 54.1 451.4 51.1 469.4 59.0C487.5 66.9 479.2 62.8 494.3 72.6C509.4 82.4 502.2 77.1 514.6 88.4C527.1 99.7 521.4 93.7 531.6 106.5C541.8 119.3 537.2 112.5 545.1 126.8C553.1 141.1 549.7 133.2 555.3 149.4C561.0 165.6 559.5 158.1 562.1 175.4C564.7 192.7 564.4 185.2 563.2 201.4C562.1 217.6 563.6 209.7 558.7 224.0C553.8 238.3 556.4 233.0 548.5 244.3C540.6 255.6 537.2 248.1 535.0 257.9C532.7 267.7 541.0 261.6 541.8 273.7C542.5 285.8 543.6 282.7 537.2 294.0C530.8 305.3 533.8 301.6 522.5 307.6C511.2 313.6 515.8 311.7 503.3 312.1C490.9 312.5 489.8 303.5 485.3 308.7C480.7 314.0 490.2 314.4 489.8 327.9C489.4 341.5 490.5 343.4 484.1 349.4C477.7 355.4 477.4 353.9 470.6 346.0C463.8 338.1 468.7 336.6 463.8 325.7C458.9 314.8 464.5 318.5 455.9 313.2C447.2 308.0 451.4 312.9 437.8 309.9C424.2 306.8 428.4 309.1 415.2 304.2C402.0 299.3 409.6 299.7 398.2 295.2C386.9 290.6 394.5 291.0 381.3 290.6C368.1 290.3 373.8 294.0 358.7 294.0C343.6 294.0 351.9 294.0 336.1 290.6C320.3 287.3 327.8 288.4 311.2 283.9C294.7 279.4 303.7 281.6 286.4 277.1C269.1 272.6 276.6 274.5 259.3 270.3C241.9 266.2 249.5 269.2 234.4 264.7C219.3 260.1 226.9 263.9 214.1 256.8C201.3 249.6 206.2 254.9 196.0 243.2C185.8 231.5 190.0 238.7 183.6 221.7C177.1 204.8 178.3 211.6 176.8 192.3Z" fill="#9fe0ee" opacity=".45" filter="url(#b14)"/>
<path d="M182.8 189.7C183.8 169.3 180.9 180.6 184.9 162.3C189.0 144.1 186.4 151.4 194.8 135.0C203.2 118.5 199.2 126.2 210.1 113.1C221.1 99.9 215.2 105.8 227.7 95.5C240.1 85.3 233.5 90.4 247.4 82.4C261.2 74.4 253.9 78.8 269.3 71.5C284.6 64.2 276.2 66.7 293.4 60.5C310.5 54.3 302.5 57.2 320.7 52.8C339.0 48.5 328.8 50.3 348.1 47.4C367.4 44.4 358.7 44.8 378.8 44.1C398.8 43.3 388.6 43.0 408.3 45.2C428.0 47.4 418.5 45.5 437.9 50.6C457.2 55.8 448.8 52.8 466.4 60.5C483.9 68.2 475.9 64.2 490.4 73.6C505.0 83.1 498.1 78.0 510.2 89.0C522.2 99.9 516.7 94.1 526.6 106.5C536.4 118.9 532.1 112.3 539.7 126.2C547.4 140.1 544.1 132.4 549.6 148.1C555.1 163.8 553.6 156.5 556.1 173.3C558.7 190.1 558.3 182.8 557.2 198.5C556.1 214.2 557.6 206.5 552.9 220.4C548.1 234.2 550.7 229.1 543.0 240.1C535.3 251.0 525.5 243.7 529.9 253.2C534.2 262.7 545.6 255.0 556.1 268.6C566.7 282.1 568.9 279.9 561.6 293.7C554.3 307.6 554.3 303.6 534.2 310.2C514.2 316.7 516.7 313.4 501.4 313.4C486.1 313.4 492.6 299.6 488.3 310.2C483.9 320.7 496.7 333.5 488.3 345.2C479.9 356.9 474.8 355.8 463.1 345.2C451.4 334.6 464.2 324.8 453.2 313.4C442.3 302.1 445.2 313.8 430.2 311.3C415.3 308.7 421.1 310.2 408.3 305.8C395.5 301.4 408.3 301.0 391.9 298.1C375.5 295.2 380.9 298.8 359.1 297.0C337.2 295.2 348.1 297.4 326.2 292.6C304.3 287.9 315.2 289.0 293.4 282.8C271.5 276.6 280.6 279.1 260.5 274.0C240.4 268.9 249.6 272.6 233.1 267.5C216.7 262.3 224.7 266.4 211.2 258.7C197.7 251.0 202.5 256.1 192.6 244.5C182.8 232.8 184.9 241.9 181.7 223.7C178.4 205.4 181.7 210.2 182.8 189.7Z" fill="#8fd0ee" opacity=".28"/>
<g clip-path="url(#mc)"><rect width="759" height="345" filter="url(#wisp2)"/></g>
<path d="M182.8 189.7C183.8 169.3 180.9 180.6 184.9 162.3C189.0 144.1 186.4 151.4 194.8 135.0C203.2 118.5 199.2 126.2 210.1 113.1C221.1 99.9 215.2 105.8 227.7 95.5C240.1 85.3 233.5 90.4 247.4 82.4C261.2 74.4 253.9 78.8 269.3 71.5C284.6 64.2 276.2 66.7 293.4 60.5C310.5 54.3 302.5 57.2 320.7 52.8C339.0 48.5 328.8 50.3 348.1 47.4C367.4 44.4 358.7 44.8 378.8 44.1C398.8 43.3 388.6 43.0 408.3 45.2C428.0 47.4 418.5 45.5 437.9 50.6C457.2 55.8 448.8 52.8 466.4 60.5C483.9 68.2 475.9 64.2 490.4 73.6C505.0 83.1 498.1 78.0 510.2 89.0C522.2 99.9 516.7 94.1 526.6 106.5C536.4 118.9 532.1 112.3 539.7 126.2C547.4 140.1 544.1 132.4 549.6 148.1C555.1 163.8 553.6 156.5 556.1 173.3C558.7 190.1 558.3 182.8 557.2 198.5C556.1 214.2 557.6 206.5 552.9 220.4C548.1 234.2 550.7 229.1 543.0 240.1C535.3 251.0 525.5 243.7 529.9 253.2C534.2 262.7 545.6 255.0 556.1 268.6C566.7 282.1 568.9 279.9 561.6 293.7C554.3 307.6 554.3 303.6 534.2 310.2C514.2 316.7 516.7 313.4 501.4 313.4C486.1 313.4 492.6 299.6 488.3 310.2C483.9 320.7 496.7 333.5 488.3 345.2C479.9 356.9 474.8 355.8 463.1 345.2C451.4 334.6 464.2 324.8 453.2 313.4C442.3 302.1 445.2 313.8 430.2 311.3C415.3 308.7 421.1 310.2 408.3 305.8C395.5 301.4 408.3 301.0 391.9 298.1C375.5 295.2 380.9 298.8 359.1 297.0C337.2 295.2 348.1 297.4 326.2 292.6C304.3 287.9 315.2 289.0 293.4 282.8C271.5 276.6 280.6 279.1 260.5 274.0C240.4 268.9 249.6 272.6 233.1 267.5C216.7 262.3 224.7 266.4 211.2 258.7C197.7 251.0 202.5 256.1 192.6 244.5C182.8 232.8 184.9 241.9 181.7 223.7C178.4 205.4 181.7 210.2 182.8 189.7Z" fill="none" stroke="#d9f3fc" stroke-opacity=".85" stroke-width="1.200"/>
<path d="M196.8 190.2C195.9 173.2 198.5 182.0 202.2 165.1C205.9 148.2 200.2 154.4 207.8 139.5C215.5 124.7 215.1 132.6 225.1 120.4C235.2 108.2 226.8 112.2 238.1 103.0C249.3 93.7 246.2 100.2 259.0 92.7C271.8 85.2 262.5 87.0 276.4 80.5C290.3 73.9 284.8 78.8 300.7 73.0C316.6 67.2 307.6 66.9 324.1 63.0C340.6 59.0 332.2 63.9 350.2 61.2C368.2 58.5 360.0 55.5 378.1 54.8C396.3 54.1 386.4 57.1 404.7 59.2C423.0 61.2 415.5 56.5 433.0 61.1C450.6 65.6 441.0 65.7 457.2 72.9C473.4 80.1 468.4 74.0 481.7 82.6C494.9 91.2 485.9 88.4 497.0 98.6C508.1 108.8 506.1 101.9 515.0 113.1C524.0 124.4 516.8 119.5 523.8 132.3C530.9 145.2 531.2 137.5 536.2 151.7C541.2 165.9 536.5 159.5 538.8 175.0C541.1 190.5 544.2 184.1 543.2 198.3C542.2 212.5 540.2 204.9 535.8 217.7C531.5 230.5 537.0 226.9 530.0 236.8C523.1 246.7 517.6 239.1 514.9 247.5C512.2 255.9 521.0 251.2 522.0 262.0C523.0 272.8 523.7 270.0 518.0 280.0C512.3 290.0 515.0 286.7 505.0 292.0C495.0 297.3 499.0 295.7 488.0 296.0C477.0 296.3 476.0 288.3 472.0 293.0C468.0 297.7 476.3 298.0 476.0 310.0C475.7 322.0 476.7 323.7 471.0 329.0C465.3 334.3 465.0 333.0 459.0 326.0C453.0 319.0 457.3 317.7 453.0 308.0C448.7 298.3 453.7 301.7 446.0 297.0C438.3 292.3 442.0 296.7 430.0 294.0C418.0 291.3 421.7 293.3 410.0 289.0C398.3 284.7 405.0 285.0 395.0 281.0C385.0 277.0 391.7 277.3 380.0 277.0C368.3 276.7 373.3 280.0 360.0 280.0C346.7 280.0 354.0 280.0 340.0 277.0C326.0 274.0 332.7 275.0 318.0 271.0C303.3 267.0 311.3 269.0 296.0 265.0C280.7 261.0 287.3 262.7 272.0 259.0C256.7 255.3 263.3 258.0 250.0 254.0C236.7 250.0 243.3 253.3 232.0 247.0C220.7 240.7 225.0 245.3 216.0 235.0C207.0 224.7 211.4 230.9 205.0 216.0C198.6 201.1 197.7 207.2 196.8 190.2Z" fill="url(#beige)"/>
<g clip-path="url(#bc)">
<rect width="759" height="345" filter="url(#hil)"/>
<rect width="759" height="345" filter="url(#sulci)"/>
<ellipse cx="450" cy="275" rx="80" ry="36" fill="#8b7b68" opacity=".5" filter="url(#b8)"/>
<ellipse cx="520" cy="200" rx="30" ry="70" fill="#8b7b68" opacity=".35" filter="url(#b8)"/>
<ellipse cx="230" cy="215" rx="40" ry="40" fill="#9a8a76" opacity=".3" filter="url(#b8)"/>
<path d="M420 262Q470 250 520 262 M420 266Q470 255 520 266 M420 270Q470 260 520 270 M420 274Q470 265 520 274 M420 278Q470 270 520 278 M420 282Q470 275 520 282 M420 286Q470 280 520 286 M420 290Q470 285 520 290" stroke="#6b5d4e" stroke-opacity=".55" stroke-width=".8" fill="none"/>
</g>
<g clip-path="url(#hc)"><rect width="759" height="345" filter="url(#rib)"/><rect width="759" height="345" filter="url(#wisp)"/></g>
<g clip-path="url(#bc)"><rect width="759" height="345" fill="#dff0ff" opacity=".14"/></g>
<path d="M291.5 277.9L305.5 327.4 M215.3 130.0L142.2 185.6 M442.0 272.7L597.7 246.6 M215.3 130.0L169.3 307.0 M597.7 246.6L495.1 66.4 M126.6 192.4L144.4 206.4 M603.6 132.2L526.1 255.0 M544.3 68.2L521.1 101.6 M252.8 79.6L300.7 64.6 M75.7 184.5L120.6 186.6 M561.0 23.7L611.0 216.5 M547.7 222.9L538.7 1.4 M293.6 43.7L157.5 180.1 M569.3 3.3L474.7 26.4 M192.6 182.9L211.5 98.3 M561.0 23.7L532.6 110.0 M577.3 219.2L558.0 339.0 M219.6 144.2L346.5 333.3 M476.7 278.2L438.0 39.0 M214.0 110.1L170.1 188.8 M299.8 321.6L369.5 320.6 M506.8 295.2L547.7 222.9 M513.9 221.3L377.6 334.0 M344.8 284.5L427.7 52.0 M130.8 194.3L262.2 279.3 M349.9 2.7L270.1 46.3" stroke="#d4e8ff" stroke-opacity=".3" stroke-width=".6" fill="none"/>
<g fill="#fff" fill-opacity=".96"><circle cx="75.7" cy="184.5" r="1.9"/><circle cx="91.9" cy="199.8" r="3.2"/><circle cx="78.0" cy="211.0" r="3.2"/><circle cx="103.8" cy="224.9" r="1.9"/><circle cx="130.8" cy="194.3" r="2.3"/><circle cx="155.9" cy="210.1" r="3.2"/><circle cx="145.3" cy="246.6" r="2.8"/><circle cx="164.3" cy="250.8" r="3.2"/><circle cx="170.7" cy="267.5" r="1.5"/><circle cx="175.4" cy="261.9" r="3.2"/><circle cx="98.0" cy="284.8" r="1.5"/><circle cx="111.4" cy="283.4" r="2.8"/><circle cx="89.1" cy="311.2" r="2.3"/><circle cx="169.3" cy="307.0" r="3.2"/><circle cx="182.4" cy="306.5" r="1.9"/><circle cx="206.0" cy="292.3" r="1.9"/><circle cx="233.3" cy="288.9" r="2.8"/><circle cx="179.6" cy="210.1" r="3.2"/><circle cx="170.4" cy="48.7" r="3.2"/><circle cx="175.4" cy="79.3" r="2.8"/><circle cx="199.9" cy="98.3" r="2.8"/><circle cx="229.7" cy="98.0" r="1.9"/><circle cx="162.9" cy="133.6" r="1.9"/><circle cx="182.4" cy="147.6" r="1.9"/><circle cx="194.9" cy="149.5" r="3.2"/><circle cx="240.0" cy="1.4" r="2.8"/><circle cx="284.0" cy="2.2" r="1.5"/><circle cx="269.5" cy="41.8" r="1.5"/><circle cx="289.5" cy="38.1" r="1.9"/><circle cx="331.3" cy="13.9" r="3.2"/><circle cx="335.5" cy="39.8" r="1.5"/><circle cx="252.8" cy="65.7" r="2.3"/><circle cx="252.8" cy="79.6" r="1.5"/><circle cx="300.7" cy="64.6" r="2.3"/><circle cx="325.7" cy="59.9" r="2.8"/><circle cx="544.3" cy="68.2" r="3.2"/><circle cx="523.9" cy="103.6" r="2.8"/><circle cx="532.6" cy="110.0" r="2.8"/><circle cx="593.0" cy="103.6" r="2.8"/><circle cx="597.2" cy="79.3" r="3.2"/><circle cx="603.6" cy="132.2" r="2.8"/><circle cx="609.7" cy="159.2" r="1.9"/><circle cx="561.0" cy="23.7" r="2.3"/><circle cx="547.0" cy="39.0" r="1.5"/><circle cx="529.0" cy="26.4" r="1.5"/><circle cx="449.6" cy="25.6" r="1.9"/><circle cx="474.7" cy="26.4" r="2.8"/><circle cx="462.1" cy="47.9" r="1.9"/><circle cx="545.6" cy="152.3" r="2.3"/><circle cx="566.5" cy="160.0" r="2.8"/><circle cx="538.7" cy="1.4" r="2.3"/><circle cx="547.9" cy="3.3" r="2.8"/><circle cx="569.3" cy="3.3" r="3.2"/><circle cx="424.5" cy="1.4" r="2.8"/><circle cx="448.2" cy="18.0" r="3.2"/><circle cx="469.0" cy="4.0" r="2.3"/><circle cx="576.3" cy="202.0" r="3.2"/><circle cx="554.0" cy="192.9" r="3.2"/><circle cx="555.4" cy="226.3" r="2.8"/><circle cx="578.2" cy="230.5" r="3.2"/><circle cx="578.2" cy="238.3" r="1.9"/><circle cx="560.4" cy="236.9" r="2.3"/><circle cx="556.8" cy="253.6" r="1.5"/><circle cx="597.7" cy="246.6" r="2.3"/><circle cx="611.6" cy="248.6" r="3.2"/><circle cx="598.5" cy="253.3" r="1.9"/><circle cx="593.5" cy="262.8" r="2.3"/><circle cx="586.0" cy="267.5" r="3.2"/><circle cx="603.6" cy="268.9" r="3.2"/><circle cx="610.0" cy="276.7" r="3.2"/><circle cx="612.5" cy="311.2" r="1.5"/><circle cx="566.5" cy="313.4" r="1.9"/><circle cx="543.7" cy="267.2" r="3.2"/><circle cx="534.0" cy="265.8" r="2.3"/><circle cx="611.0" cy="216.5" r="2.3"/><circle cx="572.0" cy="218.0" r="1.5"/><circle cx="591.6" cy="341.8" r="1.5"/><circle cx="558.0" cy="339.0" r="2.8"/><circle cx="547.7" cy="222.9" r="0.8"/><circle cx="230.1" cy="230.1" r="1.0"/><circle cx="183.4" cy="237.4" r="1.5"/><circle cx="469.9" cy="288.0" r="2.0"/><circle cx="257.6" cy="63.6" r="2.0"/><circle cx="514.6" cy="230.3" r="1.2"/><circle cx="294.9" cy="55.5" r="0.8"/><circle cx="214.0" cy="110.1" r="0.8"/><circle cx="427.7" cy="52.0" r="2.0"/><circle cx="202.9" cy="102.4" r="1.0"/><circle cx="505.7" cy="291.4" r="1.2"/><circle cx="479.8" cy="278.3" r="0.8"/><circle cx="495.1" cy="66.4" r="1.2"/><circle cx="292.6" cy="41.4" r="1.5"/><circle cx="333.4" cy="335.7" r="2.0"/><circle cx="486.5" cy="291.2" r="2.0"/><circle cx="487.9" cy="283.3" r="1.0"/><circle cx="166.1" cy="128.4" r="1.2"/><circle cx="484.2" cy="71.6" r="2.0"/><circle cx="235.4" cy="317.5" r="1.5"/><circle cx="391.5" cy="333.7" r="1.5"/><circle cx="303.1" cy="34.5" r="1.2"/><circle cx="303.1" cy="24.6" r="1.2"/><circle cx="231.7" cy="257.9" r="1.5"/><circle cx="269.2" cy="88.7" r="0.8"/><circle cx="513.9" cy="221.3" r="1.2"/><circle cx="514.5" cy="251.2" r="1.5"/><circle cx="510.0" cy="89.7" r="2.0"/><circle cx="369.5" cy="320.6" r="1.2"/><circle cx="525.1" cy="305.2" r="1.2"/><circle cx="512.7" cy="260.5" r="1.5"/><circle cx="449.1" cy="74.9" r="0.8"/><circle cx="584.8" cy="158.3" r="2.0"/><circle cx="359.6" cy="308.0" r="1.2"/><circle cx="398.1" cy="15.3" r="1.0"/><circle cx="457.5" cy="59.9" r="2.0"/><circle cx="196.4" cy="166.8" r="1.2"/><circle cx="293.6" cy="43.7" r="1.0"/><circle cx="578.8" cy="111.7" r="1.0"/><circle cx="426.3" cy="328.0" r="1.0"/><circle cx="251.8" cy="78.9" r="1.0"/><circle cx="255.7" cy="39.1" r="2.0"/><circle cx="372.2" cy="50.9" r="1.2"/><circle cx="414.6" cy="17.4" r="0.8"/><circle cx="565.0" cy="137.8" r="1.0"/><circle cx="484.6" cy="304.7" r="2.0"/><circle cx="569.8" cy="162.8" r="1.2"/><circle cx="567.4" cy="152.6" r="2.0"/><circle cx="538.9" cy="110.3" r="1.5"/><circle cx="448.4" cy="61.4" r="0.8"/><circle cx="327.2" cy="328.8" r="2.0"/><circle cx="521.1" cy="101.6" r="1.0"/><circle cx="183.4" cy="107.9" r="1.5"/><circle cx="433.3" cy="333.0" r="1.2"/><circle cx="459.0" cy="323.9" r="1.0"/><circle cx="281.5" cy="292.8" r="1.0"/><circle cx="267.6" cy="288.3" r="2.0"/><circle cx="228.1" cy="259.0" r="0.8"/><circle cx="346.5" cy="333.3" r="0.8"/><circle cx="464.9" cy="269.9" r="1.2"/><circle cx="484.5" cy="241.8" r="0.8"/><circle cx="305.5" cy="327.4" r="1.5"/><circle cx="494.1" cy="283.6" r="2.0"/><circle cx="506.8" cy="295.2" r="1.0"/><circle cx="485.5" cy="282.7" r="2.0"/><circle cx="377.6" cy="334.0" r="0.8"/><circle cx="476.7" cy="278.2" r="1.0"/><circle cx="419.0" cy="293.2" r="0.8"/><circle cx="314.9" cy="300.1" r="1.2"/><circle cx="479.9" cy="246.2" r="2.0"/><circle cx="404.8" cy="331.0" r="1.2"/><circle cx="438.8" cy="317.8" r="2.0"/><circle cx="344.8" cy="284.5" r="1.5"/><circle cx="516.7" cy="251.8" r="1.2"/><circle cx="294.0" cy="302.6" r="0.8"/><circle cx="428.9" cy="330.3" r="0.8"/><circle cx="435.7" cy="297.1" r="0.8"/><circle cx="485.7" cy="246.1" r="2.0"/><circle cx="447.2" cy="288.1" r="1.0"/><circle cx="372.0" cy="302.6" r="1.2"/><circle cx="494.1" cy="229.4" r="1.5"/><circle cx="291.5" cy="277.9" r="1.2"/><circle cx="382.8" cy="286.7" r="1.2"/><circle cx="272.3" cy="281.0" r="1.0"/><circle cx="270.3" cy="278.5" r="1.5"/><circle cx="113.2" cy="182.3" r="0.8"/><circle cx="170.1" cy="188.8" r="2.0"/><circle cx="199.3" cy="192.4" r="0.8"/><circle cx="188.0" cy="197.8" r="1.2"/><circle cx="180.9" cy="200.8" r="1.5"/><circle cx="171.8" cy="189.1" r="1.0"/><circle cx="153.6" cy="199.9" r="1.2"/><circle cx="208.8" cy="201.4" r="1.5"/><circle cx="225.0" cy="204.9" r="1.0"/><circle cx="157.5" cy="180.1" r="2.0"/><circle cx="207.2" cy="193.4" r="1.5"/><circle cx="116.4" cy="185.4" r="1.5"/><circle cx="126.6" cy="192.4" r="0.8"/><circle cx="373.1" cy="126.1" r="1.5"/><circle cx="268.6" cy="66.6" r="0.8"/><circle cx="376.1" cy="255.0" r="1.2"/><circle cx="410.6" cy="283.6" r="0.8"/><circle cx="392.8" cy="126.7" r="2.0"/><circle cx="226.7" cy="150.8" r="2.0"/><circle cx="269.0" cy="81.7" r="1.0"/><circle cx="434.3" cy="187.2" r="2.4"/><circle cx="472.5" cy="170.2" r="1.2"/><circle cx="417.8" cy="322.9" r="2.0"/><circle cx="353.5" cy="83.3" r="2.0"/><circle cx="352.4" cy="219.2" r="2.0"/><circle cx="444.2" cy="204.8" r="1.5"/><circle cx="260.4" cy="172.3" r="1.0"/><circle cx="262.7" cy="199.4" r="1.5"/><circle cx="530.4" cy="204.8" r="1.5"/><circle cx="413.2" cy="300.3" r="1.0"/><circle cx="299.9" cy="115.8" r="2.0"/><circle cx="388.0" cy="321.7" r="2.4"/><circle cx="396.0" cy="278.3" r="2.4"/><circle cx="455.4" cy="175.7" r="2.0"/><circle cx="412.6" cy="134.8" r="1.0"/><circle cx="314.1" cy="135.1" r="1.5"/><circle cx="276.2" cy="219.6" r="1.0"/><circle cx="319.3" cy="276.8" r="1.0"/><circle cx="353.5" cy="255.3" r="2.4"/><circle cx="417.6" cy="191.1" r="2.4"/><circle cx="402.8" cy="194.8" r="2.4"/><circle cx="521.3" cy="241.5" r="2.4"/><circle cx="229.6" cy="120.9" r="1.2"/><circle cx="290.9" cy="113.1" r="1.2"/><circle cx="253.8" cy="234.1" r="2.4"/><circle cx="295.5" cy="302.2" r="1.2"/><circle cx="270.1" cy="85.5" r="0.8"/><circle cx="246.9" cy="134.0" r="1.2"/><circle cx="217.8" cy="186.7" r="2.4"/><circle cx="444.8" cy="61.9" r="1.2"/><circle cx="322.7" cy="166.3" r="0.8"/><circle cx="279.6" cy="223.8" r="1.5"/><circle cx="343.8" cy="212.4" r="0.8"/><circle cx="358.6" cy="182.8" r="2.0"/><circle cx="539.2" cy="164.8" r="1.2"/><circle cx="473.8" cy="142.7" r="2.4"/><circle cx="495.2" cy="90.0" r="1.2"/><circle cx="443.9" cy="210.1" r="0.8"/><circle cx="441.7" cy="202.4" r="0.8"/><circle cx="459.9" cy="250.0" r="2.0"/><circle cx="468.5" cy="240.8" r="2.4"/><circle cx="429.0" cy="110.1" r="2.4"/><circle cx="366.3" cy="90.3" r="2.0"/><circle cx="255.2" cy="152.8" r="2.4"/><circle cx="435.6" cy="177.6" r="1.2"/><circle cx="434.9" cy="188.2" r="1.2"/><circle cx="482.7" cy="257.5" r="0.8"/><circle cx="459.1" cy="271.3" r="2.0"/><circle cx="409.4" cy="169.7" r="0.8"/><circle cx="299.4" cy="167.3" r="1.0"/><circle cx="219.9" cy="201.3" r="1.0"/><circle cx="451.9" cy="204.1" r="1.2"/><circle cx="540.5" cy="185.5" r="0.8"/><circle cx="330.3" cy="297.1" r="0.8"/></g>
</svg></div>
  <div class="abs" style="left:54px;top:396.800px;width:46px;height:4.600px;background:#8064a2"></div>
  <div class="ser" id="h1" style="letter-spacing:0.064px;left:56px;top:422px;font-size:40px;line-height:50px;color:#263f6b">Нейропсихологія в Україні:</div>
  <div class="ser" id="h2" style="letter-spacing:0.365px;left:56px;top:475px;font-size:21.500px;line-height:26px;color:#263f6b">історичні передумови та сучасний контекст</div>
  <div class="ser" id="a1" style="letter-spacing:0.090px;right:29px;top:509.250px;font-size:20px;line-height:24px;color:#e36c0a">Федько Світлана Леонідівна</div>
  <div class="ser" id="a2" style="letter-spacing:0.118px;right:29px;top:536.500px;font-size:20px;line-height:24px;color:#e36c0a">к. психол. н., доцент</div>
</div>

<!-- ===== Right panel ===== -->
<svg width="0" height="0" style="position:absolute">
  <defs>
    <filter id="f1" x="-30%" y="-30%" width="160%" height="160%"><feGaussianBlur stdDeviation=".8"/></filter>
    <filter id="f2" x="-30%" y="-30%" width="160%" height="160%"><feGaussianBlur stdDeviation="1.600"/></filter>
    <filter id="f4" x="-30%" y="-30%" width="160%" height="160%"><feGaussianBlur stdDeviation="4"/></filter>
    <symbol id="micoff" viewBox="0 0 16 16">
      <rect x="5.800" y="1.600" width="4.400" height="8" rx="2.200" fill="#fff"/>
      <path d="M3.800 7.600v.4a4.200 4.200 0 0 0 8.400 0v-.4M8 12.200v2.300" fill="none" stroke="#fff" stroke-width=".9" stroke-linecap="round"/>
      <path d="M2.600 1.600l10.800 12.800" stroke="#737373" stroke-width="2.400"/>
      <path d="M2.400 1.400l11.200 13.200" stroke="#fff" stroke-width=".9" stroke-linecap="round"/>
    </symbol>
  </defs>
</svg>

<!-- row 1 -->
<div class="tile" style="left:1124px;top:99px;background:radial-gradient(130% 130% at 0% 0%,#f5e5e5 0%,transparent 52%),radial-gradient(130% 130% at 100% 0%,#e0f2eb 0%,transparent 52%),#dfe7f5;border-color:#c3cfde">
  <div class="av"><svg width="48" height="48" viewBox="0 0 48 48">
    <defs><linearGradient id="a1bg" x1="0" y1="0" x2="1" y2="0"><stop offset="0" stop-color="#c4c1bb"/><stop offset="1" stop-color="#e3e0dc"/></linearGradient></defs>
    <rect width="48" height="48" fill="url(#a1bg)"/>
    <g filter="url(#f1)">
      <path d="M9 50c-1-12 3-24 10-27l7-2 8 1c9 3 13 14 12 28z" fill="#4f7dab"/>
      <path d="M9 42c0-8 3-15 8-18l3 8-3 14z" fill="#5b8ab6"/>
      <path d="M36 24c6 2 10 8 10 16l-4 8-6-2z" fill="#426f9c"/>
      <ellipse cx="25.600" cy="11" rx="9.600" ry="10.500" fill="#2f2327"/>
      <path d="M16 12c-1 5 0 10 2 14l4-2zM35 12c1 5 0 9-2 12l-4-2z" fill="#2f2327"/>
      <ellipse cx="26" cy="14.800" rx="6.400" ry="8" fill="#dda091"/>
      <ellipse cx="26" cy="19" rx="2.600" ry="1" fill="#c2485a"/>
      <path d="M21 22l5 6 5-6z" fill="#d6a08f"/>
      <path d="M11 42c6 2 18 3 27 0l-1 4c-8 2-18 2-25 0z" fill="#d9aa9a"/>
      <ellipse cx="25" cy="47" rx="8" ry="2" fill="#35322f"/>
    </g>
  </svg></div>
  <div class="mute"><svg width="16" height="16"><use href="#micoff"/></svg></div>
</div>
<div class="tile" style="left:1243.500px;width:116.500px;top:99px;background:radial-gradient(130% 130% at 0% 0%,#fae1e1 0%,transparent 52%),radial-gradient(130% 130% at 100% 0%,#f6f2ee 0%,transparent 52%),#f5f0ee;border-color:#e2d3d4">
  <div class="av"><svg width="48" height="48" viewBox="0 0 48 48">
    <rect width="48" height="48" fill="#6f98cf"/>
    <g filter="url(#f1)">
      <rect x="0" y="-2" width="48" height="12" fill="#5f8bc8"/>
      <ellipse cx="32" cy="9" rx="7" ry="8" fill="#f1f4f8"/>
      <ellipse cx="37" cy="4" rx="6" ry="4" fill="#dfe8f3"/>
      <ellipse cx="16" cy="8" rx="5" ry="3" fill="#9fbde2"/>
      <path d="M-2 8L8 4l8 10 8 8 6 6v22H-2z" fill="#3d4e5c"/>
      <path d="M50 12l-8 4-8 8-6 2-6-4v26h28z" fill="#51685f"/>
      <path d="M22 20l10 4 6-4 12 6v10H22z" fill="#46594f"/>
      <path d="M-2 30l14 2 10 6-4 12H-2z" fill="#2d3a3b"/>
      <path d="M-2 36h16v6H-2z" fill="#7b8e9a"/>
      <path d="M10 50c2-8 8-13 16-14l4-6 6 2 12-4 2 4-10 8 2 10z" fill="#c6d0e4"/>
      <ellipse cx="27" cy="32" rx="4.600" ry="5.400" fill="#d3dae9"/>
      <ellipse cx="27" cy="27" rx="4.200" ry="2.400" fill="#9c8f86"/>
      <ellipse cx="27" cy="29.400" rx="3.400" ry="1.600" fill="#40383a"/>
    </g>
  </svg></div>
  <div class="mute"><svg width="16" height="16"><use href="#micoff"/></svg></div>
</div>

<!-- row 2 -->
<div class="tile" style="left:1124px;top:189px;background:#f5f5f5;border:3px solid #5b5fc7;border-radius:8px">
  <svg class="abs" style="left:29.500px;top:1px" width="52" height="78" viewBox="0 0 52 78">
    <defs><linearGradient id="v3bg" x1="0" y1="0" x2="1" y2="1"><stop offset="0" stop-color="#9c9c9c"/><stop offset=".5" stop-color="#7e7e7e"/><stop offset="1" stop-color="#6c6a6a"/></linearGradient></defs>
    <rect width="52" height="78" fill="url(#v3bg)"/>
    <g filter="url(#f1)">
      <rect x="49" y="6" width="4" height="4" fill="#222"/>
      <path d="M13 34c-1-12 4-20 12-20 9 0 15 6 16 18 4 12 9 28 7 50H27l-6-30-6-4c-2-4-2-9-2-14z" fill="#9a7550"/>
      <path d="M33 22c6 6 8 16 10 28 2 10 4 20 3 30H30c2-10 2-22 0-32z" fill="#6f4c31"/>
      <ellipse cx="23.600" cy="31" rx="7.600" ry="11" fill="#dcae96"/>
      <path d="M15 26c2-8 10-10 17-6-6 0-12 2-17 6z" fill="#a98258"/>
      <path d="M-2 56c3-7 10-10 18-8l8 6 4 26H-2z" fill="#888"/>
      <path d="M-2 62l10-6 4 24H-2z" fill="#939393"/>
      <path d="M18 48l5 2 4 6-3 2-6-6z" fill="#eee9e6"/>
      <ellipse cx="22" cy="36" rx="3" ry="1" fill="#b87a74"/>
    </g>
  </svg>
</div>
<div class="tile" style="left:1243.500px;width:116.500px;top:189px;background:radial-gradient(130% 130% at 0% 0%,#f7eee0 0%,transparent 52%),radial-gradient(130% 130% at 100% 0%,#e4f2ea 0%,transparent 52%),#f4eaec;border-color:#dcd2d2">
  <div class="av"><svg width="48" height="48" viewBox="0 0 48 48">
    <rect width="48" height="48" fill="#8a5837"/>
    <g filter="url(#f1)">
      <path d="M0 0h20v14L0 22z" fill="#c9a47e"/>
      <rect x="20" y="0" width="6" height="30" fill="#6d4228"/>
      <path d="M0 22l20-8v22H0z" fill="#9a5f38"/>
      <rect x="42" y="0" width="8" height="48" fill="#2b2320"/>
      <rect x="36" y="0" width="7" height="20" fill="#5a4634"/>
      <path d="M24 8c4-4 12-3 15 3 4 7 5 16 3 24l-10-2c-2-6-4-10-6-14-2-4-3-8-2-11z" fill="#d8b48a"/>
      <path d="M24 10c3-2 7-1 8 3 1 5 0 11-3 15-3-1-5-4-6-8s-1-7 1-10z" fill="#eccbba"/>
      <path d="M29 28c8-3 16 0 20 8v14H27z" fill="#1d1c20"/>
      <path d="M28 30l5-2 1 10-4 6z" fill="#9499a6"/>
      <ellipse cx="17" cy="38" rx="11" ry="8" fill="#f3f3ee"/>
      <ellipse cx="24" cy="43" rx="6" ry="5" fill="#e9ece2"/>
      <ellipse cx="15" cy="42" rx="2" ry="2" fill="#9aa55a"/>
      <path d="M20 48l4-6 6 2-2 6z" fill="#2f4a2a"/>
    </g>
  </svg></div>
  <div class="mute"><svg width="16" height="16"><use href="#micoff"/></svg></div>
</div>

<!-- row 3 -->
<div class="tile" style="left:1124px;top:279px;background:radial-gradient(130% 130% at 0% 0%,#f9eedb 0%,transparent 52%),radial-gradient(130% 130% at 100% 0%,#f6efe5 0%,transparent 52%),#f2eaea;border-color:#d9d2cc">
  <div class="av"><svg width="48" height="48" viewBox="0 0 48 48">
    <rect width="48" height="48" fill="#bdd0e3"/>
    <g filter="url(#f1)">
      <rect x="0" y="0" width="48" height="12" fill="#a9c3df"/>
      <rect x="0" y="22" width="20" height="5" fill="#8d97a0"/>
      <rect x="30" y="20" width="20" height="8" fill="#a3a8ad"/>
      <rect x="0" y="26" width="48" height="24" fill="#86a3a8"/>
      <path d="M30 28h20v12l-20-4z" fill="#5f6b73"/>
      <path d="M32 32h18v4H32z" fill="#c9c3a6"/>
      <rect x="0" y="42" width="48" height="8" fill="#b0aaa2"/>
      <path d="M19 14c2-5 9-6 12-1 2 5 2 12 1 20l-9 2c-3-6-5-14-4-21z" fill="#86603f"/>
      <path d="M24 12c3-1 6 1 6 5s-1 8-3 9c-2 0-4-3-4-7 0-3 0-6 1-7z" fill="#dfb59d"/>
      <path d="M12 50c0-12 4-20 11-22l6 4c2 6 2 12 1 18z" fill="#cdd5f0"/>
      <path d="M27 22c3 2 5 8 5 14l-4-2z" fill="#7a5536"/>
    </g>
  </svg></div>
  <div class="mute"><svg width="16" height="16"><use href="#micoff"/></svg></div>
</div>
<div class="tile" style="left:1243.500px;top:279px;border:none;background:#c9c1b6;width:116.500px;height:86px">
  <svg class="abs" style="left:0;top:0" width="116.500" height="86" viewBox="0 0 116 86" preserveAspectRatio="none">
    <defs>
      <linearGradient id="wall6" x1="0" y1="0" x2="1" y2="0"><stop offset="0" stop-color="#a9a298"/><stop offset=".12" stop-color="#c6c0b5"/><stop offset=".5" stop-color="#d3cec4"/><stop offset="1" stop-color="#cfcac2"/></linearGradient>
      <linearGradient id="face6" x1="0" y1="0" x2="1" y2="0"><stop offset="0" stop-color="#8e6a66"/><stop offset=".5" stop-color="#b89890"/><stop offset=".55" stop-color="#d2b5aa"/><stop offset="1" stop-color="#caa99e"/></linearGradient>
    </defs>
    <rect width="116" height="86" fill="url(#wall6)"/>
    <g filter="url(#f2)">
      <ellipse cx="20" cy="10" rx="14" ry="10" fill="#d9d4ca" opacity=".6"/>
      <ellipse cx="62" cy="22" rx="16" ry="10" fill="#dbd6cd" opacity=".6"/>
      <path d="M77 70c10-4 28-5 42-2v22H74z" fill="#9a9ea5"/>
      <path d="M84 74c10-2 22-2 34 0v14H82z" fill="#85898f"/>
      <path d="M27 90c-1-10 1-22 4-32 4-13 11-20 20-20 11 0 19 6 23 18 4 10 6 22 5 34z" fill="#43262b"/>
      <path d="M38 90V64c2-6 8-9 13-8 6 0 11 3 12 9v25z" fill="url(#face6)"/>
      <path d="M36 66c2-10 8-14 15-14s13 4 14 12c-4-4-8-6-14-5-6 0-11 2-15 7z" fill="#4a272c"/>
      <path d="M64 56c6 6 10 16 10 34h-8c0-12-1-24-2-34z" fill="#552c31"/>
    </g>
  </svg>
  <div class="mute" style="left:4px;top:57.700px;background:rgba(38,34,32,.86)"><svg width="16" height="16"><use href="#micoff"/></svg></div>
</div>

<!-- row 4 -->
<div class="tile" style="left:1124px;top:369px;background:radial-gradient(130% 130% at 0% 0%,#ebe6f4 0%,transparent 52%),radial-gradient(130% 130% at 100% 0%,#e4e9f4 0%,transparent 52%),#e2f1ee;border-color:#c9d3de">
  <div class="av ini" style="background:#fbdad4;color:#8c2b20">АС</div>
  <div class="mute"><svg width="16" height="16"><use href="#micoff"/></svg></div>
</div>
<div class="tile" style="left:1243.500px;width:116.500px;top:369px;background:radial-gradient(130% 130% at 0% 0%,#eeebf6 0%,transparent 52%),radial-gradient(130% 130% at 100% 0%,#f1eef3 0%,transparent 52%),#f3eff2;border-color:#d9d5de">
  <div class="av"><svg width="48" height="48" viewBox="0 0 48 48">
    <rect width="48" height="48" fill="#2a2827"/>
    <g filter="url(#f1)">
      <path d="M40 4h10v24H42z" fill="#e9e9e0"/>
      <path d="M36 2l6 2v12l-4 2z" fill="#6b6a60"/>
      <path d="M8 16c2-10 14-16 24-12 8 4 10 14 8 24l-6 10-22 4C6 34 6 24 8 16z" fill="#8c5b33"/>
      <path d="M8 18c2-8 8-12 14-12-4 6-6 14-8 22-1 5-3 9-5 10-2-6-3-14-1-20z" fill="#6e4426"/>
      <path d="M22 10c6-4 14-2 17 4 2 6 1 14-2 20-3 4-8 4-12 1-4-4-6-10-6-15 0-4 1-8 3-10z" fill="#e6c4b0"/>
      <path d="M20 10c4-4 10-5 14-3-5 1-9 5-11 10-2 6-3 12-6 16-2-8-1-17 3-23z" fill="#9b6a3c"/>
      <ellipse cx="34" cy="25" rx="2.400" ry="1" fill="#c27878"/>
      <path d="M2 50c2-10 10-15 20-16l8 4 8-4c5 2 8 8 9 16z" fill="#d9cf9c"/>
      <path d="M28 32l3-1 5 17h-5z" fill="#2f2c2a"/>
    </g>
  </svg></div>
  <div class="mute"><svg width="16" height="16"><use href="#micoff"/></svg></div>
</div>

<!-- row 5 -->
<div class="tile" style="left:1124px;top:459px;background:radial-gradient(130% 130% at 0% 0%,#f0e8f4 0%,transparent 52%),radial-gradient(130% 130% at 100% 0%,#ede8f2 0%,transparent 52%),#f1e8ee;border-color:#d8d0da">
  <div class="av ini" style="background:#ecc6cb;color:#6b1928">СК</div>
  <div class="mute"><svg width="16" height="16"><use href="#micoff"/></svg></div>
</div>
<div class="tile" style="left:1243.500px;width:116.500px;top:459px;background:radial-gradient(130% 130% at 0% 0%,#f8e5e8 0%,transparent 52%),radial-gradient(130% 130% at 100% 0%,#f1ebf2 0%,transparent 52%),#f2edf2;border-color:#dfd3d8">
  <div class="av"><svg width="48" height="48" viewBox="0 0 48 48">
    <rect width="48" height="48" fill="#3d2a1b"/>
    <g filter="url(#f1)">
      <rect x="44" y="6" width="6" height="36" fill="#bdb89c"/>
      <path d="M4 22c2-12 12-18 22-16 10 2 16 10 16 22 0 10-4 16-10 20H10C4 40 2 30 4 22z" fill="#a1835a"/>
      <path d="M6 24c2-8 8-14 14-16-2 8-4 16-8 22-2 4-4 8-4 12-3-6-4-12-2-18z" fill="#8a6c44"/>
      <path d="M20 14c6-4 13-2 16 4 2 6 1 14-3 20-3 4-8 4-11 0-3-5-5-10-5-15 0-4 1-7 3-9z" fill="#e4bda2"/>
      <path d="M18 14c4-5 12-7 18-2-6 0-11 3-13 8-2 6-3 12-7 16-2-8-2-16 2-22z" fill="#b3956a"/>
      <path d="M34 16c4 6 6 16 2 26l6-2c2-8 0-18-4-24z" fill="#8f7048"/>
      <ellipse cx="28" cy="33" rx="2.600" ry="1" fill="#c98080"/>
      <path d="M4 50c2-8 8-14 16-15l6 6 2 9z" fill="#ebdfbb"/>
    </g>
  </svg></div>
  <div class="mute"><svg width="16" height="16"><use href="#micoff"/></svg></div>
</div>


<div class="abs" id="pager" style="left:1200px;top:555px;width:90px;height:20px">
  <svg class="abs" style="left:11px;top:3px" width="9" height="14" viewBox="0 0 9 14"><path d="M7.500 1.200L1.700 7l5.800 5.800" stroke="#bdbdbd" stroke-width="1.200" fill="none"/></svg>
  <div class="abs" style="left:22px;top:1px;width:40px;text-align:center;font-size:13.500px;line-height:18px;color:#2e2e2e">1/3</div>
  <svg class="abs" style="left:64.500px;top:3px" width="9" height="14" viewBox="0 0 9 14"><path d="M1.500 1.200L7.300 7l-5.800 5.800" stroke="#3d3d3d" stroke-width="1.200" fill="none"/></svg>
</div>

<div class="abs" style="left:1124px;top:584px;width:236px;height:1px;background:#fff"></div>
<div class="abs" id="selfvid" style="left:1124px;top:585px;width:236px;height:130px;border-radius:5px 5px 0 0;overflow:hidden;background:#b9b3b3">
    <svg class="abs" style="left:0;top:0" width="236" height="130" viewBox="0 0 236 130">
    <defs>
      <linearGradient id="wallS" x1="0" y1="0" x2="1" y2="0"><stop offset="0" stop-color="#bfb5b8"/><stop offset=".25" stop-color="#c9bfc2"/><stop offset=".7" stop-color="#d0c6c9"/><stop offset="1" stop-color="#c6bcc0"/></linearGradient>
      <linearGradient id="wallT" x1="0" y1="0" x2="0" y2="1"><stop offset="0" stop-color="#6d6466" stop-opacity=".45"/><stop offset=".25" stop-color="#6d6466" stop-opacity="0"/></linearGradient>
      <radialGradient id="faceS" cx=".52" cy=".42" r=".62"><stop offset="0" stop-color="#cdaa9e"/><stop offset=".65" stop-color="#bf9a8e"/><stop offset="1" stop-color="#94746c"/></radialGradient>
      <linearGradient id="hairS" x1="0" y1="0" x2="1" y2="0"><stop offset="0" stop-color="#5d4a42"/><stop offset=".35" stop-color="#3b2d29"/><stop offset="1" stop-color="#33272a"/></linearGradient>
      <filter id="fS" x="-20%" y="-20%" width="140%" height="140%"><feGaussianBlur stdDeviation="1.300"/></filter>
      <filter id="fS3" x="-30%" y="-30%" width="160%" height="160%"><feGaussianBlur stdDeviation="3.500"/></filter>
    </defs>
    <rect width="236" height="130" fill="url(#wallS)"/>
    <rect width="236" height="130" fill="url(#wallT)"/>
    <g filter="url(#fS3)">
      <path d="M24.2 51.5L46.8 57.2L50.6 130.8L24.2 130.8z" fill="#8f7f84" opacity=".6"/>
      <path d="M163.8 51.5L184.5 70.4L177.0 117.5L161.9 117.5z" fill="#a3979b" opacity=".35"/>
    </g>
    <g filter="url(#fS)">
      <!-- shelf -->
      <rect x="16.800" y="66" width="7" height="70" fill="#3a3231"/>
      <rect x="-2" y="65.500" width="31" height="2.600" fill="#3f3735"/>
      <rect x="-2" y="95" width="20" height="2.400" fill="#4a4240"/>
      <rect x="-2" y="122" width="31" height="3" fill="#3f3735"/>
      <rect x="-2" y="68" width="19" height="27" fill="#b9b4b8" opacity=".8"/>
      <rect x="-2" y="97.500" width="19" height="24" fill="#aaa5a8" opacity=".8"/>
      <rect x="0" y="91" width="14" height="4" fill="#bfae8a"/>
      <ellipse cx="6.200" cy="56" rx="7.500" ry="7.500" fill="#3d3532"/>
      <ellipse cx="5.500" cy="56.500" rx="5.600" ry="6" fill="#e1d8c8"/>
      <!-- furniture right -->
      <path d="M165.7 121.7L217.5 121.7L217.5 130.8L165.7 130.8z" fill="#5a514d"/>
      <path d="M216.6 116.6L237.4 115.7L237.4 130.8L216.6 130.8z" fill="#4a4442"/>
      <!-- hair -->
      <path d="M78.9 -3.2C94.0 -17.0 90.2 -8.9 112.8 -8.9C135.5 -8.9 132.3 -13.9 146.8 -3.2C161.3 7.5 150.9 1.8 156.2 23.2C161.6 44.6 160.3 37.7 162.8 60.9C165.3 84.2 166.0 76.7 163.8 93.0C161.6 109.4 161.9 102.1 156.2 110.0C150.6 117.9 152.5 117.2 146.8 116.6C141.1 116.0 143.0 116.0 139.2 108.1C135.5 100.3 145.5 95.5 135.5 93.0C125.4 90.5 125.4 98.1 109.1 100.6C92.7 103.1 95.2 97.4 86.4 100.6C77.6 103.7 87.7 104.7 82.6 110.0C77.6 115.3 78.6 121.6 71.3 116.6C64.1 111.6 66.6 107.2 60.9 94.9C55.3 82.6 55.8 89.9 54.3 79.8C52.9 69.7 52.2 80.4 56.6 64.7C61.0 49.0 60.1 55.3 67.5 32.6C75.0 10.0 63.8 10.6 78.9 -3.2Z" fill="url(#hairS)"/>
      <path d="M88.3 100.6C95.1 96.5 128.7 96.5 135.5 100.6C142.3 104.6 146.0 126.7 139.2 130.8C132.5 134.8 91.3 134.8 84.5 130.8C77.7 126.7 81.5 104.6 88.3 100.6Z" fill="#b08c80"/>
      <path d="M109.1 5.3C119.7 5.3 117.9 3.1 127.9 9.1C138.0 15.0 134.1 11.6 139.2 23.2C144.4 34.8 142.3 28.2 143.4 44.0C144.5 59.7 144.7 54.0 142.6 70.4C140.6 86.7 142.9 81.1 137.4 93.0C131.8 105.0 135.5 100.3 126.0 106.2C116.6 112.2 119.7 110.9 109.1 110.9C98.4 110.9 102.8 112.2 94.0 106.2C85.2 100.3 88.2 105.0 82.6 93.0C77.1 81.1 78.9 86.7 77.4 70.4C75.8 54.0 75.7 60.3 78.1 44.0C80.5 27.6 78.6 33.0 84.5 21.3C90.4 9.7 87.7 14.4 95.8 9.1C104.0 3.7 98.4 5.3 109.1 5.3Z" fill="url(#faceS)"/>
      <path d="M78.9 2.5C84.5 -1.9 84.5 7.5 84.5 19.4C84.5 31.4 81.4 21.3 78.9 38.3C76.4 55.3 76.4 52.1 77.0 70.4C77.6 88.6 82.6 77.9 80.8 93.0C78.9 108.1 77.9 115.0 71.3 115.7C64.7 116.3 66.5 106.9 60.9 94.9C55.4 83.0 56.0 89.9 54.7 79.8C53.5 69.7 52.9 80.4 57.2 64.7C61.4 49.0 60.3 53.4 67.5 32.6C74.8 11.9 73.2 6.9 78.9 2.5Z" fill="#6a554b"/>
      <path d="M62.3 51.5L66.0 40.2L69.8 70.4L66.0 93.0L61.9 83.6z" fill="#a3948a" opacity=".7"/>
      <path d="M135.5 6.2C137.7 -1.9 139.9 -7.0 146.8 -1.3C153.7 4.3 150.7 2.5 156.2 23.2C161.8 44.0 160.9 37.7 163.4 60.9C165.9 84.2 166.2 76.7 163.8 93.0C161.4 109.4 161.9 102.1 156.2 110.0C150.6 117.9 152.5 117.2 146.8 116.6C141.1 116.0 142.7 116.0 139.2 108.1C135.8 100.3 135.3 105.6 136.4 93.0C137.5 80.4 140.3 86.7 142.6 70.4C145.0 54.0 144.2 59.7 143.4 44.0C142.6 28.2 142.8 35.8 140.2 23.2C137.5 10.6 133.3 14.4 135.5 6.2Z" fill="#35292a"/>
      <!-- features -->
      <ellipse cx="89.2" cy="50.9" rx="7" ry="2.800" fill="#4a3a3a"/>
      <ellipse cx="126.0" cy="51.9" rx="7" ry="2.800" fill="#4a3a3a"/>
      <ellipse cx="89.2" cy="57.2" rx="9" ry="4" fill="#d6bcb6" opacity=".35"/>
      <ellipse cx="126.0" cy="58.1" rx="9" ry="4" fill="#d6bcb6" opacity=".35"/>
      <path d="M78.9 40.2Q90.2 35.5 101.5 42.5M114.7 43.0Q127.9 37.4 139.2 44.3" stroke="#4e3d38" stroke-width="2.200" fill="none"/>
      <path d="M98.7 76.0Q106.2 79.8 113.8 76.0" stroke="#99766c" stroke-width="2" fill="none"/>
      <ellipse cx="101.5" cy="66.6" rx="4" ry="12" fill="#dcc0b4" opacity=".6"/>
      <ellipse cx="106.6" cy="92.1" rx="12.500" ry="3.200" fill="#a9777a"/>
      <ellipse cx="84.5" cy="79.8" rx="6" ry="20" fill="#8d6f68" opacity=".5"/>
      <!-- clothes -->
      <path d="M58.1 130.8C54.6 130.0 61.5 126.9 63.8 125.1C66.0 123.3 72.3 118.4 75.1 117.2C77.9 115.9 82.5 113.8 84.5 115.7C86.5 117.5 93.7 128.7 90.2 130.8C86.7 132.8 61.6 131.5 58.1 130.8Z" fill="#e3e3e8"/>
      <path d="M131.7 130.8C126.8 128.7 134.4 117.5 136.4 115.7C138.4 113.8 143.4 115.9 146.8 117.2C150.2 118.4 158.4 123.3 161.9 125.1C165.4 126.9 177.2 130.0 173.2 130.8C169.2 131.5 136.6 132.8 131.7 130.8Z" fill="#e3e3e8"/>
      <path d="M134.5 108.1L127.9 130.8" stroke="#3a302e" stroke-width=".8" fill="none"/>
    </g>
    <rect width="236" height="1" fill="#1a1516" opacity=".55"/>
  </svg>

</div>

</body>
</html>
